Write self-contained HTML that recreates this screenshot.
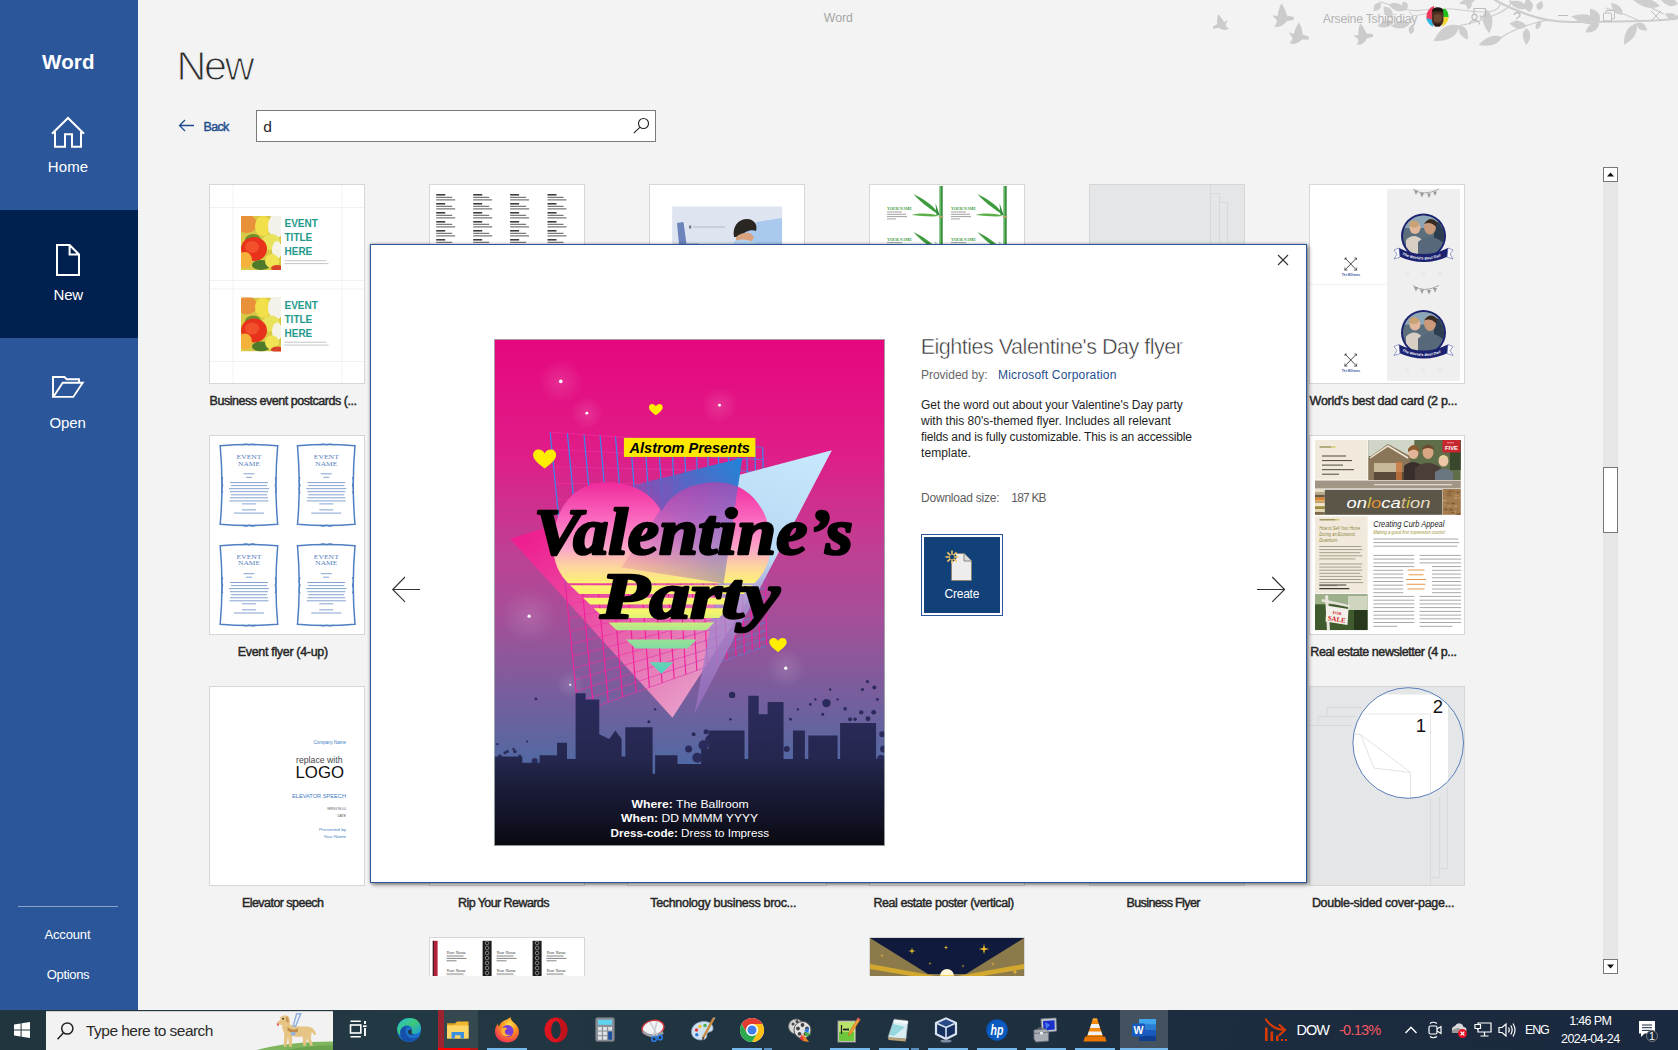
<!DOCTYPE html>
<html lang="en">
<head>
<meta charset="utf-8">
<title>Word</title>
<style>
*{box-sizing:border-box;margin:0;padding:0}
html,body{width:1678px;height:1050px;overflow:hidden;background:#f3f3f3;font-family:"Liberation Sans",sans-serif;color:#262626}
.a{position:absolute}
.t{position:absolute;white-space:nowrap;line-height:1}
</style>
</head>
<body>
<div class="a" style="left:0;top:0;width:138px;height:1010px;background:#2b579a"></div>
<div class="a" style="left:0;top:210px;width:138px;height:128px;background:#002050"></div>
<div class="t" style="left:42.1px;top:50px;font-size:20.5px;line-height:23px;color:#fff;letter-spacing:0.12px;font-weight:bold;">Word</div>
<svg class="a" style="left:0;top:0" width="138" height="440" viewBox="0 0 138 440" fill="none" stroke="#fff" stroke-width="2"><path d="M52.700 133 L68 118 L83.300 133" stroke-linecap="square"/><path d="M55 131.500 V146.700 H65 V134.300 H72 V146.700 H81 V131.500"/><path d="M57 245 H69.600 L79 254.500 V275 H57 Z M69.600 245 V254.500 H79"/><path d="M53 397 V377 H64.500 L66.700 379.200 H79 V382.500" stroke-width="1.900"/><path d="M53.300 396.900 L62.700 382.700 H82.700 L73.300 396.900 Z" stroke-width="1.900"/></svg>
<div class="t" style="left:47.8px;top:158px;font-size:15px;line-height:17px;color:#fff;letter-spacing:0.12px;">Home</div>
<div class="t" style="left:53.5px;top:286px;font-size:15px;line-height:17px;color:#fff;letter-spacing:-0.17px;">New</div>
<div class="t" style="left:49.6px;top:414px;font-size:15px;line-height:17px;color:#fff;letter-spacing:-0.17px;">Open</div>
<div class="a" style="left:18px;top:906px;width:100px;height:1px;background:#8aa3cc"></div>
<div class="t" style="left:44.4px;top:927px;font-size:13px;line-height:15px;color:#fff;letter-spacing:-0.14px;">Account</div>
<div class="t" style="left:46.8px;top:967px;font-size:13px;line-height:15px;color:#fff;letter-spacing:-0.33px;">Options</div>

<svg class="a" style="left:1180px;top:0" width="498" height="60" viewBox="1180 0 498 60"><g fill="#cbcbcb"><path transform="translate(1220,23) rotate(-20) scale(-0.75,0.75)" d="M-10,-0.3 L-5.4,0.8 C-5,-4 -3.5,-9 -1.5,-12 C1,-9 3,-4 3.9,0 L10.8,1.5 L10.8,4.6 L3.9,5.4 C2,8 -1,10.5 -3.9,11.2 L-8.8,11.2 C-7,9 -6,7 -6.2,4.6 L-10,0.8Z"/><path transform="translate(1283,15.5) rotate(0) scale(1.0,1.0)" d="M-10,-0.3 L-5.4,0.8 C-5,-4 -3.5,-9 -1.5,-12 C1,-9 3,-4 3.9,0 L10.8,1.5 L10.8,4.6 L3.9,5.4 C2,8 -1,10.5 -3.9,11.2 L-8.8,11.2 C-7,9 -6,7 -6.2,4.6 L-10,0.8Z"/><path transform="translate(1299,34) rotate(8) scale(0.95,0.95)" d="M-10,-0.3 L-5.4,0.8 C-5,-4 -3.5,-9 -1.5,-12 C1,-9 3,-4 3.9,0 L10.8,1.5 L10.8,4.6 L3.9,5.4 C2,8 -1,10.5 -3.9,11.2 L-8.8,11.2 C-7,9 -6,7 -6.2,4.6 L-10,0.8Z"/><path transform="translate(1363,34) rotate(-8) scale(0.9,0.9)" d="M-10,-0.3 L-5.4,0.8 C-5,-4 -3.5,-9 -1.5,-12 C1,-9 3,-4 3.9,0 L10.8,1.5 L10.8,4.6 L3.9,5.4 C2,8 -1,10.5 -3.9,11.2 L-8.8,11.2 C-7,9 -6,7 -6.2,4.6 L-10,0.8Z"/></g><g fill="none" stroke="#cdcdcd" stroke-linecap="round"><path d="M1380 1.800 Q1392 6 1403.600 9 T1427.500 9.500 T1470 11 T1500 3" stroke-width="1.100"/><path d="M1409.600 12 Q1411 15 1413 15.500 T1427 13.500" stroke-width="1"/><path d="M1410 23 L1413 16" stroke-width=".9"/><path d="M1495 0 Q1505 6 1526 14 T1572 22 T1640 21 T1678 16" stroke-width="2.200"/><path d="M1460 25.500 Q1480 22 1497 14 T1510 0" stroke-width="1.200"/><path d="M1502 37 Q1512 30 1530 24.500 T1548 21" stroke-width="1.200"/><path d="M1606 8 Q1625 14 1640 21" stroke-width="1.100"/><path d="M1640 0 Q1650 8 1664 14" stroke-width="1.300"/></g><path d="M1459.8 25.6Q1443.0 21.1 1433.5 41.0Q1455.5 42.4 1459.8 25.6ZM1459.8 25.6Q1456.3 34.9 1467.6 39.5Q1469.5 27.4 1459.8 25.6ZM1486.2 9.3Q1478.0 20.1 1489.3 33.3Q1496.9 17.7 1486.2 9.3ZM1502.4 37.2Q1490.2 32.2 1478.4 45.0Q1495.4 48.5 1502.4 37.2ZM1526.5 26.3Q1521.0 17.6 1509.4 23.2Q1518.3 32.5 1526.5 26.3ZM1526.5 27.9Q1518.9 34.7 1526.5 45.0Q1534.1 34.7 1526.5 27.9ZM1599.3 21.7Q1589.9 10.2 1571.4 16.3Q1586.3 28.9 1599.3 21.7ZM1599.3 21.7Q1602.6 11.5 1590.0 8.5Q1588.6 21.3 1599.3 21.7ZM1599.3 23.2Q1589.5 20.6 1585.3 32.5Q1597.9 33.3 1599.3 23.2ZM1622.5 14.7Q1623.3 4.7 1611.0 3.0Q1612.5 15.3 1622.5 14.7ZM1636.5 23.2Q1623.3 27.2 1624.0 45.0Q1639.7 36.6 1636.5 23.2ZM1636.5 23.2Q1637.2 31.6 1647.3 30.2Q1644.4 20.4 1636.5 23.2ZM1475.0 0.0Q1467.4 -4.2 1459.0 3.5Q1469.8 7.0 1475.0 0.0ZM1470.0 1.0Q1463.7 3.1 1468.0 9.5Q1474.7 5.7 1470.0 1.0ZM1527.0 8.0Q1522.4 -1.7 1509.0 1.5Q1517.2 12.5 1527.0 8.0ZM1530.0 12.0Q1537.2 4.6 1527.0 -2.0Q1520.4 8.2 1530.0 12.0ZM1538.0 10.0Q1545.7 9.1 1542.0 1.0Q1533.5 3.7 1538.0 10.0ZM1536.0 29.0Q1542.0 28.3 1541.0 21.0Q1534.0 23.3 1536.0 29.0ZM1660.0 6.0Q1651.1 -4.7 1633.0 0.0Q1647.3 11.9 1660.0 6.0ZM1678.0 4.0Q1672.9 -5.0 1661.0 0.0Q1669.5 9.8 1678.0 4.0ZM1678.0 19.0Q1675.2 10.8 1665.0 14.0Q1670.4 23.2 1678.0 19.0ZM1650.0 3.0Q1649.4 -5.1 1640.0 -3.0Q1642.6 6.3 1650.0 3.0ZM1380.4 2.4Q1372.4 2.0 1373.8 11.3Q1383.1 9.9 1380.4 2.4ZM1384.0 6.6Q1381.6 15.9 1393.0 18.0Q1393.6 6.5 1384.0 6.6ZM1388.7 4.2Q1393.5 13.8 1406.6 10.1Q1398.2 -0.7 1388.7 4.2ZM1403.0 1.8Q1399.8 7.6 1407.2 9.0Q1409.6 1.8 1403.0 1.8ZM1394.0 22.0Q1385.7 17.2 1377.4 26.2Q1389.0 30.1 1394.0 22.0ZM1410.0 23.2Q1401.2 16.9 1391.0 26.2Q1403.6 31.9 1410.0 23.2ZM1412.0 25.0Q1405.9 28.1 1410.8 34.6Q1417.2 29.5 1412.0 25.0Z" fill="#cecece"/></svg>
<div class="t" style="left:823.8px;top:11px;font-size:12.3px;line-height:14px;color:#a6a6a6;letter-spacing:-0.04px;">Word</div>
<div class="t" style="left:1322.8px;top:12px;font-size:12.3px;line-height:14px;color:#b4b4b4;letter-spacing:-0.25px;">Arseine Tshipidiay</div>
<svg class="a" style="left:1426px;top:4.700px" width="23" height="23" viewBox="0 0 25 25"><clipPath id="avc"><circle cx="12.500" cy="12.500" r="12"/></clipPath><g clip-path="url(#avc)"><rect width="25" height="25" fill="#f4f4f4"/><path d="M0 0H9L7 17H0Z" fill="#ee3a5c"/><path d="M0 14L7 16L8 25H0Z" fill="#2ab5e0"/><path d="M18 4H25V14H19Z" fill="#22bf22"/><path d="M19 13H25V25H17Z" fill="#f0d832"/><path d="M6.500 9 Q7 3.500 12.500 3.500 Q18.500 3.500 19 9 V17 Q18 23 12.500 23.500 Q7 23 6.500 17Z" fill="#4a2e20"/><path d="M8.500 11 q4 -2.500 8.500 0 l-.3 6 q-4 4 -8 0z" fill="#6b4630"/><path d="M9 19.500 q3.500 2 7 0 l-.5 4 h-6z" fill="#2a1a14"/><path d="M6.500 6 Q8 2.500 12.500 2.500 Q17.500 2.500 19 6 L18 8 Q12.500 5.500 7.500 8Z" fill="#1c1410"/></g></svg>
<svg class="a" style="left:1468px;top:6px" width="20" height="20" viewBox="0 0 20 20" fill="none" stroke="#bdbdbd" stroke-width="1.100"><path d="M6 8V2.500H17.500V10H15L13 12.500V10H11.500"/><circle cx="6.500" cy="11" r="2.600"/><path d="M1.500 18.500 Q1.500 14.500 6.500 14.500 Q11.500 14.500 11.500 18.500"/></svg>
<div class="t" style="left:1512.8px;top:8px;font-size:15px;line-height:17px;color:#bdbdbd;">?</div>
<div class="a" style="left:1558px;top:15px;width:10px;height:1px;background:#bdbdbd"></div>
<svg class="a" style="left:1602px;top:9px" width="14" height="14" viewBox="0 0 14 14" fill="none" stroke="#bdbdbd" stroke-width="1"><rect x="1.500" y="4" width="8" height="8" rx="1"/><path d="M4 4V2.200Q4 1.500 5 1.500H11.500Q12.500 1.500 12.500 2.500V9Q12.500 9.800 11.500 9.800H9.500"/></svg>
<svg class="a" style="left:1649px;top:9px" width="14" height="14" viewBox="0 0 14 14" fill="none" stroke="#bdbdbd" stroke-width="1"><path d="M2 2L12 12M12 2L2 12"/></svg>
<div class="t" style="left:176.6px;top:43px;font-size:41.3px;line-height:46px;color:#2b2b2b;letter-spacing:-2.37px;-webkit-text-stroke:1.15px #f3f3f3;">New</div>
<svg class="a" style="left:177px;top:118px" width="20" height="16" viewBox="0 0 20 16" fill="none" stroke="#1f4e8f" stroke-width="1.300"><path d="M17 7.500H2.500M8 2L2.500 7.500L8 13"/></svg>
<div class="t" style="left:203.6px;top:120px;font-size:12.5px;line-height:14px;color:#1f4e8f;letter-spacing:-0.70px;-webkit-text-stroke:0.45px #1f4e8f;">Back</div>
<div class="a" style="left:256px;top:110px;width:400px;height:32px;background:#fff;border:1px solid #7a7a7a"></div>
<div class="t" style="left:263.2px;top:118px;font-size:15.5px;line-height:17px;color:#262626;">d</div>
<svg class="a" style="left:631px;top:116px" width="20" height="20" viewBox="0 0 20 20" fill="none" stroke="#222" stroke-width="1.100"><circle cx="12.500" cy="7.500" r="5"/><path d="M8.800 11.300L2.800 17.200"/></svg>
<div class="a" style="left:1603px;top:167px;width:15px;height:807px;background:#e6e6e6"></div>
<div class="a" style="left:1603px;top:167px;width:15px;height:15px;background:#fff;border:1px solid #777"></div>
<svg class="a" style="left:1603px;top:167px" width="15" height="15" viewBox="0 0 15 15"><path d="M4 9.500H11L7.500 5.500Z" fill="#111"/></svg>
<div class="a" style="left:1603px;top:959px;width:15px;height:15px;background:#fff;border:1px solid #777"></div>
<svg class="a" style="left:1603px;top:959px" width="15" height="15" viewBox="0 0 15 15"><path d="M4 5.500H11L7.500 9.500Z" fill="#111"/></svg>
<div class="a" style="left:1603px;top:467px;width:15px;height:66px;background:#fff;border:1px solid #777"></div>

<!-- thumbnails -->
<div class="a" style="left:209px;top:184px;width:156px;height:200px;background:#fff;border:1px solid #d6d6d6;overflow:hidden"><svg class="a" style="left:0;top:0" width="154" height="198" viewBox="0 0 154 198" font-family="Liberation Sans, sans-serif" ><path d="M0 22.5H154" stroke="#f1f1f1" stroke-width="1"/><path d="M0 95.5H154" stroke="#f1f1f1" stroke-width="1"/><path d="M0 104H154" stroke="#f1f1f1" stroke-width="1"/><path d="M0 176.5H154" stroke="#f1f1f1" stroke-width="1"/><path d="M23 0V198" stroke="#f3f3f3" stroke-width="1"/><path d="M132 0V198" stroke="#f3f3f3" stroke-width="1"/><g transform="translate(31,31)"><clipPath id="r0c"><rect width="40" height="54"/></clipPath><g clip-path="url(#r0c)"><rect width="40" height="54" fill="#d9c845"/><ellipse cx="6" cy="8" rx="10" ry="9" fill="#e9903a"/><ellipse cx="22" cy="10" rx="8" ry="10" fill="#f2e04a"/><ellipse cx="35" cy="10" rx="8" ry="12" fill="#f3f1ea"/><ellipse cx="12" cy="24" rx="8" ry="6" fill="#6f8f2e"/><ellipse cx="30" cy="26" rx="9" ry="8" fill="#e8e35a"/><ellipse cx="36" cy="34" rx="5" ry="9" fill="#f5f3e6"/><ellipse cx="13" cy="33" rx="13" ry="12" fill="#e8321c"/><ellipse cx="11" cy="31" rx="7" ry="6" fill="#f2502a"/><ellipse cx="4" cy="44" rx="7" ry="8" fill="#f4b23a"/><ellipse cx="20" cy="49" rx="9" ry="5" fill="#4f7a2a"/><ellipse cx="31" cy="45" rx="7" ry="7" fill="#f0e455"/><ellipse cx="36" cy="52" rx="6" ry="3" fill="#d8402a"/></g></g><text x="74.5" y="42" font-size="10" font-weight="bold" fill="#1f9a8c">EVENT</text><text x="74.5" y="56" font-size="10" font-weight="bold" fill="#1f9a8c">TITLE</text><text x="74.5" y="70" font-size="10" font-weight="bold" fill="#1f9a8c">HERE</text><path d="M74.5 75.7h42M74.5 78.6h44" stroke="#b5b5b5" stroke-width=".8"/><g transform="translate(31,112.5)"><clipPath id="r1c"><rect width="40" height="54"/></clipPath><g clip-path="url(#r1c)"><rect width="40" height="54" fill="#d9c845"/><ellipse cx="6" cy="8" rx="10" ry="9" fill="#e9903a"/><ellipse cx="22" cy="10" rx="8" ry="10" fill="#f2e04a"/><ellipse cx="35" cy="10" rx="8" ry="12" fill="#f3f1ea"/><ellipse cx="12" cy="24" rx="8" ry="6" fill="#6f8f2e"/><ellipse cx="30" cy="26" rx="9" ry="8" fill="#e8e35a"/><ellipse cx="36" cy="34" rx="5" ry="9" fill="#f5f3e6"/><ellipse cx="13" cy="33" rx="13" ry="12" fill="#e8321c"/><ellipse cx="11" cy="31" rx="7" ry="6" fill="#f2502a"/><ellipse cx="4" cy="44" rx="7" ry="8" fill="#f4b23a"/><ellipse cx="20" cy="49" rx="9" ry="5" fill="#4f7a2a"/><ellipse cx="31" cy="45" rx="7" ry="7" fill="#f0e455"/><ellipse cx="36" cy="52" rx="6" ry="3" fill="#d8402a"/></g></g><text x="74.5" y="123.5" font-size="10" font-weight="bold" fill="#1f9a8c">EVENT</text><text x="74.5" y="137.5" font-size="10" font-weight="bold" fill="#1f9a8c">TITLE</text><text x="74.5" y="151.5" font-size="10" font-weight="bold" fill="#1f9a8c">HERE</text><path d="M74.5 157.2h42M74.5 160.1h44" stroke="#b5b5b5" stroke-width=".8"/></svg></div>
<div class="a" style="left:429px;top:184px;width:156px;height:200px;background:#fff;border:1px solid #d6d6d6;overflow:hidden"><svg class="a" style="left:0;top:0" width="154" height="198" viewBox="0 0 154 198" font-family="Liberation Sans, sans-serif" ><path d="M6.2 9.8h9" stroke="#333" stroke-width="1.5"/><path d="M6.2 12.3h16M6.2 14.8h19" stroke="#7a7a7a" stroke-width="1.2"/><path d="M6.2 18.8h9" stroke="#333" stroke-width="1.5"/><path d="M6.2 21.3h16M6.2 23.8h19" stroke="#7a7a7a" stroke-width="1.2"/><path d="M6.2 27.8h9" stroke="#333" stroke-width="1.5"/><path d="M6.2 30.3h16M6.2 32.8h19" stroke="#7a7a7a" stroke-width="1.2"/><path d="M6.2 36.8h9" stroke="#333" stroke-width="1.5"/><path d="M6.2 39.3h16M6.2 41.8h19" stroke="#7a7a7a" stroke-width="1.2"/><path d="M6.2 45.8h9" stroke="#333" stroke-width="1.5"/><path d="M6.2 48.3h16M6.2 50.8h19" stroke="#7a7a7a" stroke-width="1.2"/><path d="M6.2 54.8h9" stroke="#333" stroke-width="1.5"/><path d="M6.2 57.3h16M6.2 59.8h19" stroke="#7a7a7a" stroke-width="1.2"/><path d="M43.2 9.8h9" stroke="#333" stroke-width="1.5"/><path d="M43.2 12.3h16M43.2 14.8h19" stroke="#7a7a7a" stroke-width="1.2"/><path d="M43.2 18.8h9" stroke="#333" stroke-width="1.5"/><path d="M43.2 21.3h16M43.2 23.8h19" stroke="#7a7a7a" stroke-width="1.2"/><path d="M43.2 27.8h9" stroke="#333" stroke-width="1.5"/><path d="M43.2 30.3h16M43.2 32.8h19" stroke="#7a7a7a" stroke-width="1.2"/><path d="M43.2 36.8h9" stroke="#333" stroke-width="1.5"/><path d="M43.2 39.3h16M43.2 41.8h19" stroke="#7a7a7a" stroke-width="1.2"/><path d="M43.2 45.8h9" stroke="#333" stroke-width="1.5"/><path d="M43.2 48.3h16M43.2 50.8h19" stroke="#7a7a7a" stroke-width="1.2"/><path d="M43.2 54.8h9" stroke="#333" stroke-width="1.5"/><path d="M43.2 57.3h16M43.2 59.8h19" stroke="#7a7a7a" stroke-width="1.2"/><path d="M80.1 9.8h9" stroke="#333" stroke-width="1.5"/><path d="M80.1 12.3h16M80.1 14.8h19" stroke="#7a7a7a" stroke-width="1.2"/><path d="M80.1 18.8h9" stroke="#333" stroke-width="1.5"/><path d="M80.1 21.3h16M80.1 23.8h19" stroke="#7a7a7a" stroke-width="1.2"/><path d="M80.1 27.8h9" stroke="#333" stroke-width="1.5"/><path d="M80.1 30.3h16M80.1 32.8h19" stroke="#7a7a7a" stroke-width="1.2"/><path d="M80.1 36.8h9" stroke="#333" stroke-width="1.5"/><path d="M80.1 39.3h16M80.1 41.8h19" stroke="#7a7a7a" stroke-width="1.2"/><path d="M80.1 45.8h9" stroke="#333" stroke-width="1.5"/><path d="M80.1 48.3h16M80.1 50.8h19" stroke="#7a7a7a" stroke-width="1.2"/><path d="M80.1 54.8h9" stroke="#333" stroke-width="1.5"/><path d="M80.1 57.3h16M80.1 59.8h19" stroke="#7a7a7a" stroke-width="1.2"/><path d="M117.5 9.8h9" stroke="#333" stroke-width="1.5"/><path d="M117.5 12.3h16M117.5 14.8h19" stroke="#7a7a7a" stroke-width="1.2"/><path d="M117.5 18.8h9" stroke="#333" stroke-width="1.5"/><path d="M117.5 21.3h16M117.5 23.8h19" stroke="#7a7a7a" stroke-width="1.2"/><path d="M117.5 27.8h9" stroke="#333" stroke-width="1.5"/><path d="M117.5 30.3h16M117.5 32.8h19" stroke="#7a7a7a" stroke-width="1.2"/><path d="M117.5 36.8h9" stroke="#333" stroke-width="1.5"/><path d="M117.5 39.3h16M117.5 41.8h19" stroke="#7a7a7a" stroke-width="1.2"/><path d="M117.5 45.8h9" stroke="#333" stroke-width="1.5"/><path d="M117.5 48.3h16M117.5 50.8h19" stroke="#7a7a7a" stroke-width="1.2"/><path d="M117.5 54.8h9" stroke="#333" stroke-width="1.5"/><path d="M117.5 57.3h16M117.5 59.8h19" stroke="#7a7a7a" stroke-width="1.2"/></svg></div>
<div class="a" style="left:649px;top:184px;width:156px;height:200px;background:#fff;border:1px solid #d6d6d6;overflow:hidden"><svg class="a" style="left:0;top:0" width="154" height="198" viewBox="0 0 154 198" font-family="Liberation Sans, sans-serif" ><rect x="22.2" y="21.5" width="110" height="80" fill="#dfe4f1"/><path d="M27 38 l6.500 -1 l3 22 h-7.500z" fill="#6c84bb"/><path d="M33 58.500h16v1.500h-16z" fill="#8da0cc"/><rect x="39" y="40.500" width="2.200" height="3" fill="#777"/><path d="M43 42h32" stroke="#b5b8c4" stroke-width="1"/><path d="M86 60 C88 48 98 38 112 36 L132 33 V62 H86Z" fill="#a9caee"/><path d="M84 52 C82 42 88 34 97 34 C104 34 108 40 106 46 C102 44 94 46 90 52Z" fill="#2a2622"/><path d="M86 52 q6 -5 14 -4 l4 4 l-4 8 h-14z" fill="#d9a27e"/><path d="M84 56 q10 -4 22 2 v4 h-22z" fill="#b9d3f0"/></svg></div>
<div class="a" style="left:869px;top:184px;width:156px;height:200px;background:#fff;border:1px solid #d6d6d6;overflow:hidden"><svg class="a" style="left:0;top:0" width="154" height="198" viewBox="0 0 154 198" font-family="Liberation Sans, sans-serif" ><rect x="69.5" y="1" width="3.2" height="70" fill="#2f8a3b"/><rect x="70.1" y="1" width="1" height="70" fill="#6fc05a"/><path d="M69.5 30 C59.5 24 49.5 16 43.5 9 C53.5 14 63.5 20 69.5 30Z" fill="#3e9b3c"/><path d="M69.5 31 C59.5 28 49.5 28 41.5 30 C51.5 31 61.5 32 69.5 31Z" fill="#5cb04a"/><path d="M69.5 30 l-4 -12 l1 12z" fill="#2f8a3b"/><rect x="69.0" y="31" width="4.2" height="1.6" fill="#b5a56a"/><path d="M69.5 68 C59.5 62 49.5 54 43.5 47 C53.5 52 63.5 58 69.5 68Z" fill="#3e9b3c"/><path d="M69.5 69 C59.5 66 49.5 66 41.5 68 C51.5 69 61.5 70 69.5 69Z" fill="#5cb04a"/><path d="M69.5 68 l-4 -12 l1 12z" fill="#2f8a3b"/><rect x="69.0" y="69" width="4.2" height="1.6" fill="#b5a56a"/><rect x="133.5" y="1" width="3.2" height="70" fill="#2f8a3b"/><rect x="134.1" y="1" width="1" height="70" fill="#6fc05a"/><path d="M133.5 30 C123.5 24 113.5 16 107.5 9 C117.5 14 127.5 20 133.5 30Z" fill="#3e9b3c"/><path d="M133.5 31 C123.5 28 113.5 28 105.5 30 C115.5 31 125.5 32 133.5 31Z" fill="#5cb04a"/><path d="M133.5 30 l-4 -12 l1 12z" fill="#2f8a3b"/><rect x="133.0" y="31" width="4.2" height="1.6" fill="#b5a56a"/><path d="M133.5 68 C123.5 62 113.5 54 107.5 47 C117.5 52 127.5 58 133.5 68Z" fill="#3e9b3c"/><path d="M133.5 69 C123.5 66 113.5 66 105.5 68 C115.5 69 125.5 70 133.5 69Z" fill="#5cb04a"/><path d="M133.5 68 l-4 -12 l1 12z" fill="#2f8a3b"/><rect x="133.0" y="69" width="4.2" height="1.6" fill="#b5a56a"/><text x="17" y="24.9" font-family="Liberation Serif, serif" font-size="3.9" font-weight="bold" fill="#3c9a3a" textLength="25" lengthAdjust="spacingAndGlyphs">YOUR NAME</text><path d="M17 27h15M17 29.3h19M17 31.6h20M17 33.9h9" stroke="#8c8c8c" stroke-width=".8"/><text x="17" y="55.5" font-family="Liberation Serif, serif" font-size="3.9" font-weight="bold" fill="#3c9a3a" textLength="25" lengthAdjust="spacingAndGlyphs">YOUR NAME</text><path d="M17 57.6h15M17 59.900000000000006h19M17 62.2h20M17 64.5h9" stroke="#8c8c8c" stroke-width=".8"/><text x="81" y="24.9" font-family="Liberation Serif, serif" font-size="3.9" font-weight="bold" fill="#3c9a3a" textLength="25" lengthAdjust="spacingAndGlyphs">YOUR NAME</text><path d="M81 27h15M81 29.3h19M81 31.6h20M81 33.9h9" stroke="#8c8c8c" stroke-width=".8"/><text x="81" y="55.5" font-family="Liberation Serif, serif" font-size="3.9" font-weight="bold" fill="#3c9a3a" textLength="25" lengthAdjust="spacingAndGlyphs">YOUR NAME</text><path d="M81 57.6h15M81 59.900000000000006h19M81 62.2h20M81 64.5h9" stroke="#8c8c8c" stroke-width=".8"/></svg></div>
<div class="a" style="left:1089px;top:184px;width:156px;height:200px;background:#e5e6e8;border:1px solid #d6d6d6;overflow:hidden"><svg class="a" style="left:0;top:0" width="154" height="198" viewBox="0 0 154 198" font-family="Liberation Sans, sans-serif" ><path d="M120.5 0V198M120.5 8.5H129.5V198M129.5 17.5H137.5V198" fill="none" stroke="#d8d9db" stroke-width="1"/></svg></div>
<div class="a" style="left:1309px;top:184px;width:156px;height:200px;background:#fff;border:1px solid #d6d6d6;overflow:hidden"><svg class="a" style="left:0;top:0" width="154" height="198" viewBox="0 0 154 198" font-family="Liberation Sans, sans-serif" ><rect x="77" y="4" width="73" height="192" fill="#efefef"/><path d="M0 99.5H77" stroke="#f0f0f0"/><g transform="translate(0,51)"><path d="M103 -47 q10 8 26 0" fill="none" stroke="#888" stroke-width=".7"/><path d="M104 -45.5h4l-2 4.5z" fill="#9a9a9a"/><path d="M110 -43.0h4l-2 4.5z" fill="#9a9a9a"/><path d="M117 -42.5h4l-2 4.5z" fill="#9a9a9a"/><path d="M123 -44.5h4l-2 4.5z" fill="#9a9a9a"/><circle cx="113.5" cy="0" r="22.5" fill="#1b2370"/><clipPath id="dc1"><circle cx="113.5" cy="0" r="20.5"/></clipPath><g clip-path="url(#dc1)"><rect x="90" y="-22" width="48" height="44" fill="#5a6e7c"/><rect x="90" y="-22" width="48" height="14" fill="#8ea7b8"/><rect x="124" y="-14" width="16" height="20" fill="#2d3d50"/><ellipse cx="105" cy="-8" rx="5.5" ry="6" fill="#e0b79c"/><ellipse cx="104" cy="-12" rx="5" ry="3.5" fill="#c9a273"/><path d="M96 20 V4 q8 -8 16 0 V20z" fill="#d8cfc4"/><ellipse cx="120" cy="-9" rx="6" ry="7.5" fill="#c99a7c"/><path d="M114 -12 q6 -9 13 -2 l-1 5 q-5 -6 -12 -3z" fill="#3a2c22"/><path d="M108 22 V6 q12 -10 24 0 V22z" fill="#56687a"/></g><path d="M89 12 q24 12 49 0 l1 8 q-25 12 -51 0z" fill="#1b2370"/><path d="M89 12 l-5 2 l3 4 l-3 5 l6 -2z M138 12 l5 2 l-3 4 l3 5 l-6 -2z" fill="#fff" stroke="#5560a8" stroke-width=".6"/><path id="dc1p" d="M92 18.5 q21.5 10 43 0" fill="none"/><text font-size="3.6" font-weight="bold" font-style="italic" fill="#fff"><textPath href="#dc1p" textLength="40" lengthAdjust="spacingAndGlyphs">The World's Best Dad</textPath></text><circle cx="97" cy="38" r="1.6" fill="none" stroke="#dedede" stroke-width=".6"/><circle cx="113" cy="38" r="1.6" fill="none" stroke="#dedede" stroke-width=".6"/><circle cx="130" cy="38" r="1.6" fill="none" stroke="#dedede" stroke-width=".6"/></g><g transform="translate(0,147.5)"><path d="M103 -47 q10 8 26 0" fill="none" stroke="#888" stroke-width=".7"/><path d="M104 -45.5h4l-2 4.5z" fill="#9a9a9a"/><path d="M110 -43.0h4l-2 4.5z" fill="#9a9a9a"/><path d="M117 -42.5h4l-2 4.5z" fill="#9a9a9a"/><path d="M123 -44.5h4l-2 4.5z" fill="#9a9a9a"/><circle cx="113.5" cy="0" r="22.5" fill="#1b2370"/><clipPath id="dc2"><circle cx="113.5" cy="0" r="20.5"/></clipPath><g clip-path="url(#dc2)"><rect x="90" y="-22" width="48" height="44" fill="#5a6e7c"/><rect x="90" y="-22" width="48" height="14" fill="#8ea7b8"/><rect x="124" y="-14" width="16" height="20" fill="#2d3d50"/><ellipse cx="105" cy="-8" rx="5.5" ry="6" fill="#e0b79c"/><ellipse cx="104" cy="-12" rx="5" ry="3.5" fill="#c9a273"/><path d="M96 20 V4 q8 -8 16 0 V20z" fill="#d8cfc4"/><ellipse cx="120" cy="-9" rx="6" ry="7.5" fill="#c99a7c"/><path d="M114 -12 q6 -9 13 -2 l-1 5 q-5 -6 -12 -3z" fill="#3a2c22"/><path d="M108 22 V6 q12 -10 24 0 V22z" fill="#56687a"/></g><path d="M89 12 q24 12 49 0 l1 8 q-25 12 -51 0z" fill="#1b2370"/><path d="M89 12 l-5 2 l3 4 l-3 5 l6 -2z M138 12 l5 2 l-3 4 l3 5 l-6 -2z" fill="#fff" stroke="#5560a8" stroke-width=".6"/><path id="dc2p" d="M92 18.5 q21.5 10 43 0" fill="none"/><text font-size="3.6" font-weight="bold" font-style="italic" fill="#fff"><textPath href="#dc2p" textLength="40" lengthAdjust="spacingAndGlyphs">The World's Best Dad</textPath></text><circle cx="97" cy="38" r="1.6" fill="none" stroke="#dedede" stroke-width=".6"/><circle cx="113" cy="38" r="1.6" fill="none" stroke="#dedede" stroke-width=".6"/><circle cx="130" cy="38" r="1.6" fill="none" stroke="#dedede" stroke-width=".6"/></g><g stroke="#333" stroke-width=".9" fill="none"><path d="M35 73.0l11.5 12M46.5 73.0l-11.5 12"/><path d="M35 75.0v-2h2M46.5 75.0v-2h-2" stroke-width=".7"/><path d="M44 85.2h2.7v-2.7M37.5 85.2h-2.7v-2.7" stroke-width=".7"/></g><text x="41" y="91.3" text-anchor="middle" font-size="2.9" font-weight="bold" fill="#4858a8">The Millianos</text><g stroke="#333" stroke-width=".9" fill="none"><path d="M35 169.0l11.5 12M46.5 169.0l-11.5 12"/><path d="M35 171.0v-2h2M46.5 171.0v-2h-2" stroke-width=".7"/><path d="M44 181.2h2.7v-2.7M37.5 181.2h-2.7v-2.7" stroke-width=".7"/></g><text x="41" y="187.3" text-anchor="middle" font-size="2.9" font-weight="bold" fill="#4858a8">The Millianos</text></svg></div>
<div class="a" style="left:209px;top:435px;width:156px;height:200px;background:#fff;border:1px solid #d6d6d6;overflow:hidden"><svg class="a" style="left:0;top:0" width="154" height="198" viewBox="0 0 154 198" font-family="Liberation Sans, sans-serif" ><g transform="translate(9.2,8.3)" fill="none" stroke="#4f7fc2"><path d="M1 1.5 Q29.75 -1 58.5 1.5 Q55.0 40.75 58.5 80.0 Q29.75 82.5 1 80.0 Q4.5 40.75 1 1.5Z" stroke-width="1.5"/><path d="M23 .8 q3.5 -2.2 7 0 q3.5 -2.2 7 0M23 80.7 q3.5 2.2 7 0 q3.5 2.2 7 0" stroke-width="1.1"/><path d="M3.6 33 q-2 4 0 8 q-2 4 0 8M55.9 33 q2 4 0 8 q2 4 0 8" stroke-width="1.1"/></g><g font-family="Liberation Serif, serif" font-size="6.6" fill="#5a83c0" text-anchor="middle"><text x="39.0" y="22.6" textLength="25" lengthAdjust="spacingAndGlyphs">EVENT</text><text x="39.0" y="29.5" textLength="22" lengthAdjust="spacingAndGlyphs">NAME</text></g><path d="M33.5 37.8h11M36.0 41.3h6M20.0 46.6h38M21.0 49.6h36M19.0 52.7h40M20.0 55.7h38M21.0 58.8h36M20.0 61.8h38M19.5 64.9h39M32.0 67.9h14M32.0 73.89999999999999h14M24.0 77.1h30" stroke="#6f93c9" stroke-width="1" stroke-opacity=".85"/><g transform="translate(9.2,108.2)" fill="none" stroke="#4f7fc2"><path d="M1 1.5 Q29.75 -1 58.5 1.5 Q55.0 40.75 58.5 80.0 Q29.75 82.5 1 80.0 Q4.5 40.75 1 1.5Z" stroke-width="1.5"/><path d="M23 .8 q3.5 -2.2 7 0 q3.5 -2.2 7 0M23 80.7 q3.5 2.2 7 0 q3.5 2.2 7 0" stroke-width="1.1"/><path d="M3.6 33 q-2 4 0 8 q-2 4 0 8M55.9 33 q2 4 0 8 q2 4 0 8" stroke-width="1.1"/></g><g font-family="Liberation Serif, serif" font-size="6.6" fill="#5a83c0" text-anchor="middle"><text x="39.0" y="122.5" textLength="25" lengthAdjust="spacingAndGlyphs">EVENT</text><text x="39.0" y="129.4" textLength="22" lengthAdjust="spacingAndGlyphs">NAME</text></g><path d="M33.5 137.7h11M36.0 141.2h6M20.0 146.5h38M21.0 149.6h36M19.0 152.6h40M20.0 155.7h38M21.0 158.7h36M20.0 161.8h38M19.5 164.8h39M32.0 167.8h14M32.0 173.8h14M24.0 177.0h30" stroke="#6f93c9" stroke-width="1" stroke-opacity=".85"/><g transform="translate(86.5,8.3)" fill="none" stroke="#4f7fc2"><path d="M1 1.5 Q29.75 -1 58.5 1.5 Q55.0 40.75 58.5 80.0 Q29.75 82.5 1 80.0 Q4.5 40.75 1 1.5Z" stroke-width="1.5"/><path d="M23 .8 q3.5 -2.2 7 0 q3.5 -2.2 7 0M23 80.7 q3.5 2.2 7 0 q3.5 2.2 7 0" stroke-width="1.1"/><path d="M3.6 33 q-2 4 0 8 q-2 4 0 8M55.9 33 q2 4 0 8 q2 4 0 8" stroke-width="1.1"/></g><g font-family="Liberation Serif, serif" font-size="6.6" fill="#5a83c0" text-anchor="middle"><text x="116.3" y="22.6" textLength="25" lengthAdjust="spacingAndGlyphs">EVENT</text><text x="116.3" y="29.5" textLength="22" lengthAdjust="spacingAndGlyphs">NAME</text></g><path d="M110.8 37.8h11M113.3 41.3h6M97.3 46.6h38M98.3 49.6h36M96.3 52.7h40M97.3 55.7h38M98.3 58.8h36M97.3 61.8h38M96.8 64.9h39M109.3 67.9h14M109.3 73.89999999999999h14M101.3 77.1h30" stroke="#6f93c9" stroke-width="1" stroke-opacity=".85"/><g transform="translate(86.5,108.2)" fill="none" stroke="#4f7fc2"><path d="M1 1.5 Q29.75 -1 58.5 1.5 Q55.0 40.75 58.5 80.0 Q29.75 82.5 1 80.0 Q4.5 40.75 1 1.5Z" stroke-width="1.5"/><path d="M23 .8 q3.5 -2.2 7 0 q3.5 -2.2 7 0M23 80.7 q3.5 2.2 7 0 q3.5 2.2 7 0" stroke-width="1.1"/><path d="M3.6 33 q-2 4 0 8 q-2 4 0 8M55.9 33 q2 4 0 8 q2 4 0 8" stroke-width="1.1"/></g><g font-family="Liberation Serif, serif" font-size="6.6" fill="#5a83c0" text-anchor="middle"><text x="116.3" y="122.5" textLength="25" lengthAdjust="spacingAndGlyphs">EVENT</text><text x="116.3" y="129.4" textLength="22" lengthAdjust="spacingAndGlyphs">NAME</text></g><path d="M110.8 137.7h11M113.3 141.2h6M97.3 146.5h38M98.3 149.6h36M96.3 152.6h40M97.3 155.7h38M98.3 158.7h36M97.3 161.8h38M96.8 164.8h39M109.3 167.8h14M109.3 173.8h14M101.3 177.0h30" stroke="#6f93c9" stroke-width="1" stroke-opacity=".85"/></svg></div>
<div class="a" style="left:1309px;top:435px;width:156px;height:200px;background:#fff;border:1px solid #d6d6d6;overflow:hidden"><svg class="a" style="left:0;top:0" width="154" height="198" viewBox="0 0 154 198" font-family="Liberation Sans, sans-serif" ><rect x="5" y="4" width="52.6" height="39.6" fill="#f1eadc"/><path d="M9.5 11h12" stroke="#8a8240" stroke-width="1.2"/><path d="M21.5 11h4" stroke="#c9b93c" stroke-width="1"/><path d="M12 20.0h24" stroke="#5b5548" stroke-width="1.1"/><path d="M12 24.55h30" stroke="#5b5548" stroke-width="1.1"/><path d="M12 29.1h21" stroke="#5b5548" stroke-width="1.1"/><path d="M12 33.65h32" stroke="#5b5548" stroke-width="1.1"/><path d="M12 38.2h17" stroke="#5b5548" stroke-width="1.1"/><clipPath id="nlp"><rect x="58.3" y="4" width="92.5" height="40"/></clipPath><g clip-path="url(#nlp)"><rect x="58.3" y="4" width="92.5" height="40" fill="#5f6d49"/><rect x="58.3" y="4" width="46" height="16" fill="#cfd6c8"/><path d="M58.3 22 L78 8 L100 20 V44 H58.3Z" fill="#8b7558"/><path d="M60 22 L78 10 L98 22" fill="none" stroke="#efe6d4" stroke-width="1.5"/><rect x="64" y="27" width="28" height="9" fill="#c8b89a"/><rect x="64" y="36" width="30" height="8" fill="#5a4a3a"/><rect x="86" y="26" width="6" height="18" fill="#c9743a" opacity=".8"/><ellipse cx="103.5" cy="17" rx="5" ry="6" fill="#e2b596"/><path d="M98 13 q6 -8 11 0 l0 3 q-5 -5 -11 0z" fill="#8a5a30"/><path d="M94 44 V30 q9 -8 18 0 V44z" fill="#3a2e2c"/><ellipse cx="118" cy="16" rx="5.5" ry="7" fill="#d9a684"/><path d="M112 12 q6 -7 12 0 v2 q-6 -4 -12 0z" fill="#6a4a30"/><path d="M105 44 V32 q13 -10 26 0 V44z" fill="#4a3e36"/><ellipse cx="133.5" cy="25" rx="5" ry="5.5" fill="#ecc6a6"/><path d="M128.5 22 q5 -6 10 0 q-5 -2 -10 0z" fill="#e8d9a0"/><path d="M125 44 V36 q9 -7 18 0 V44z" fill="#6a7680"/><rect x="140" y="4" width="11" height="30" fill="#39482c"/><rect x="132.5" y="4" width="18" height="12.5" fill="#c7282e"/><text x="141.5" y="14.2" font-size="5.6" font-weight="bold" fill="#fff" text-anchor="middle" textLength="13" lengthAdjust="spacingAndGlyphs">FIVE</text><path d="M137 6.8h7" stroke="#f3b0b0" stroke-width=".8"/></g><rect x="5" y="44.5" width="145.8" height="8" fill="#a39585"/><path d="M64 48.8h78" stroke="#f2ece2" stroke-width="1.1"/><rect x="5" y="53.00" width="9.8" height="2.9" fill="#e9dfc8"/><rect x="5" y="55.87" width="9.8" height="2.9" fill="#b7a98c"/><rect x="5" y="58.74" width="9.8" height="2.9" fill="#6b5a3e"/><rect x="5" y="61.61" width="9.8" height="2.9" fill="#d9822e"/><rect x="5" y="64.48" width="9.8" height="2.9" fill="#c9a36a"/><rect x="5" y="67.35" width="9.8" height="2.9" fill="#efe6cf"/><rect x="5" y="70.22" width="9.8" height="2.9" fill="#9b8d3a"/><rect x="5" y="73.09" width="9.8" height="2.9" fill="#e4d6b4"/><rect x="5" y="75.96" width="9.8" height="2.9" fill="#7d6a4a"/><rect x="14.8" y="53.7" width="117.4" height="25.1" fill="#5c5649"/><rect x="132.5" y="53" width="18.3" height="25.8" fill="#a27b4e"/><rect x="136.6" y="66.6" width="3.1" height="1.4" fill="#8d6840"/><rect x="142.8" y="55.1" width="2.0" height="1.4" fill="#8d6840"/><rect x="136.9" y="59.1" width="5.0" height="1.4" fill="#8d6840"/><rect x="141.5" y="66.7" width="3.2" height="1.4" fill="#7a5532"/><rect x="136.5" y="57.1" width="4.8" height="1.4" fill="#8d6840"/><rect x="144.7" y="69.6" width="2.2" height="1.4" fill="#c9a06a"/><rect x="137.6" y="54.2" width="4.6" height="1.4" fill="#8d6840"/><rect x="142.3" y="75.6" width="3.2" height="1.4" fill="#8d6840"/><rect x="139.1" y="72.7" width="3.3" height="1.4" fill="#7a5532"/><rect x="146.9" y="55.8" width="2.4" height="1.4" fill="#7a5532"/><rect x="136.9" y="69.6" width="4.3" height="1.4" fill="#b88a56"/><rect x="139.5" y="73.5" width="3.7" height="1.4" fill="#8d6840"/><rect x="142.1" y="75.2" width="4.0" height="1.4" fill="#c9a06a"/><rect x="146.5" y="77.3" width="4.0" height="1.4" fill="#7a5532"/><rect x="144.0" y="61.3" width="3.6" height="1.4" fill="#c9a06a"/><rect x="144.2" y="58.6" width="4.5" height="1.4" fill="#b88a56"/><rect x="137.4" y="55.0" width="4.6" height="1.4" fill="#8d6840"/><rect x="134.2" y="72.7" width="3.2" height="1.4" fill="#7a5532"/><rect x="133.1" y="63.8" width="3.2" height="1.4" fill="#c9a06a"/><rect x="133.5" y="68.2" width="2.1" height="1.4" fill="#b88a56"/><rect x="141.6" y="75.6" width="2.8" height="1.4" fill="#7a5532"/><rect x="148.8" y="60.9" width="2.2" height="1.4" fill="#c9a06a"/><text x="36.5" y="72" font-size="15" font-style="italic" textLength="84" lengthAdjust="spacingAndGlyphs"><tspan fill="#fff">on</tspan><tspan fill="#cdbb46">l</tspan><tspan fill="#e0902f">o</tspan><tspan fill="#fff">ca</tspan><tspan fill="#d8b98f">t</tspan><tspan fill="#d6c23a">i</tspan><tspan fill="#e6dcc6">on</tspan></text><rect x="5" y="80.4" width="52.6" height="77" fill="#f1eadc"/><path d="M9.5 83.8h16" stroke="#8a8240" stroke-width="1.2"/><path d="M25.5 83.8h4" stroke="#c9b93c" stroke-width="1"/><text x="9.3" y="94.3" font-size="4.6" font-style="italic" fill="#8a8234" textLength="41" lengthAdjust="spacingAndGlyphs">How to Sell Your Home</text><text x="9.3" y="100.0" font-size="4.6" font-style="italic" fill="#8a8234" textLength="36" lengthAdjust="spacingAndGlyphs">During an Economic</text><text x="9.3" y="105.7" font-size="4.6" font-style="italic" fill="#8a8234" textLength="18" lengthAdjust="spacingAndGlyphs">Downturn</text><path d="M9.3 110.5h42M9.3 113.6h43M9.3 116.7h41M9.3 119.8h43M9.3 122.9h36M9.3 128.0h43M9.3 131.1h42M9.3 134.2h43M9.3 137.3h41M9.3 140.4h43M9.3 143.5h42M9.3 146.6h44M9.3 149.7h18" stroke="#a49e8c" stroke-width="1"/><path d="M9.3 149h27M9.3 152.6h30" stroke="#3a3a30" stroke-width="1.1"/><clipPath id="nls"><rect x="5" y="158.3" width="52.6" height="36"/></clipPath><g clip-path="url(#nls)"><rect x="5" y="158.3" width="52.6" height="36" fill="#3f5a2c"/><rect x="5" y="158.3" width="52.6" height="10" fill="#9db08a"/><rect x="38" y="160" width="20" height="14" fill="#cfd6c0"/><rect x="44" y="174" width="14" height="20" fill="#27381c"/><path d="M15 160 l3 -1 l2 36 h-3z" fill="#e8e4dc"/><path d="M12 163 l28 6 l-.5 2.5 l-28 -6z" fill="#e8e4dc"/><path d="M16.5 169.5 l22 3.5 l-1 16 l-22 -3.5z" fill="#f4f1ec"/><text x="27" y="178.5" font-family="Liberation Serif, serif" font-size="4.2" font-weight="bold" fill="#c22" text-anchor="middle" transform="rotate(8 27 178)">FOR</text><text x="26.5" y="185.5" font-family="Liberation Serif, serif" font-size="7" font-weight="bold" fill="#c22" text-anchor="middle" transform="rotate(8 26 185)" textLength="18" lengthAdjust="spacingAndGlyphs">SALE</text></g><text x="63.3" y="90.5" font-size="8.2" font-style="italic" fill="#222" textLength="71" lengthAdjust="spacingAndGlyphs">Creating Curb Appeal</text><text x="63.3" y="98.3" font-size="4.6" font-style="italic" fill="#9a9130" textLength="72" lengthAdjust="spacingAndGlyphs">Making a good first impression counts!</text><path d="M63.3 103.0h85M63.3 106.6h86M63.3 110.2h84M63.3 119.4h41M109.5 119.4h41.5M63.3 123.1h41M109.5 123.1h41.5M63.3 126.9h41M109.5 126.9h41.5M63.3 130.6h41M122 130.6h29M63.3 134.3h30M122 134.3h29M63.3 138.1h30M122 138.1h29M63.3 141.8h30M122 141.8h29M63.3 145.5h30M122 145.5h29M63.3 149.2h30M122 149.2h29M63.3 153.0h30M122 153.0h29M63.3 156.7h30M122 156.7h29M63.3 160.4h41M109.5 160.4h41.5M63.3 164.2h41M109.5 164.2h41.5M63.3 167.9h41M109.5 167.9h41.5M63.3 171.6h41M109.5 171.6h41.5M63.3 175.4h41M109.5 175.4h41.5M63.3 179.1h41M109.5 179.1h41.5M63.3 182.8h41M109.5 182.8h41.5M63.3 186.5h41M109.5 186.5h41.5M63.3 190.3h24M109.5 190.3h33" stroke="#a8a8a8" stroke-width="1"/><path d="M97.5 134.0h17M98.5 138.8h15M96 143.5h20M96.5 148.2h19M97.5 153.0h17" stroke="#e39a4a" stroke-width="1.1"/></svg></div>
<div class="a" style="left:209px;top:686px;width:156px;height:200px;background:#fff;border:1px solid #d6d6d6;overflow:hidden"><svg class="a" style="left:0;top:0" width="154" height="198" viewBox="0 0 154 198" font-family="Liberation Sans, sans-serif" ><g text-anchor="end"><text x="136" y="57.3" font-size="4.6" fill="#3f7ec5" textLength="32.5" lengthAdjust="spacingAndGlyphs">Company Name</text><text x="132.5" y="75.6" font-size="8.6" fill="#484848" textLength="46.5" lengthAdjust="spacingAndGlyphs">replace with</text><text x="134" y="91" font-size="16.6" fill="#111" textLength="48.5" lengthAdjust="spacingAndGlyphs">LOGO</text><text x="136" y="110.5" font-size="6.2" fill="#3f7ec5" textLength="54" lengthAdjust="spacingAndGlyphs">ELEVATOR SPEECH</text><text x="136" y="123.2" font-size="2.9" fill="#555" textLength="19" lengthAdjust="spacingAndGlyphs">VERSION 0.0</text><text x="136" y="130" font-size="2.9" fill="#555" textLength="8.5" lengthAdjust="spacingAndGlyphs">DATE</text><text x="136" y="143.7" font-size="4.3" fill="#3f7ec5" textLength="27" lengthAdjust="spacingAndGlyphs">Presented by</text><text x="136" y="150.7" font-size="4.3" fill="#3f7ec5" textLength="22.5" lengthAdjust="spacingAndGlyphs">Your Name</text></g></svg></div>
<div class="a" style="left:429px;top:686px;width:156px;height:200px;background:#fff;border:1px solid #d6d6d6;overflow:hidden"></div>
<div class="a" style="left:869px;top:686px;width:156px;height:200px;background:#fff;border:1px solid #d6d6d6;overflow:hidden"></div>
<div class="a" style="left:627px;top:730px;width:200px;height:156px;background:#fff;border:1px solid #d6d6d6"></div>
<div class="a" style="left:1089px;top:686px;width:156px;height:200px;background:#e5e6e8;border:1px solid #d6d6d6;overflow:hidden"></div>
<div class="a" style="left:1309px;top:686px;width:156px;height:200px;background:#e5e6e8;border:1px solid #d6d6d6;overflow:hidden"><svg class="a" style="left:0;top:0" width="154" height="198" viewBox="0 0 154 198" font-family="Liberation Sans, sans-serif" ><path d="M0 38.5H42M8 38.5V29.5H45M17 29.5V20.5H52" fill="none" stroke="#d6d7d9" stroke-width="1"/><path d="M120.5 110V198M120.5 190.5H129.5V110M129.5 181.5H137.5V100" fill="none" stroke="#d9dadc" stroke-width="1"/><clipPath id="dbc"><circle cx="98.2" cy="56" r="55"/></clipPath><g clip-path="url(#dbc)"><rect x="40" y="0" width="120" height="115" fill="#fff"/><rect x="138" y="0" width="30" height="115" fill="#e5e6e8"/><rect x="40" y="0" width="120" height="7.5" fill="#e5e6e8"/><path d="M52 27H120.5V115M120.5 7.5H138" fill="none" stroke="#e6e6e6" stroke-width="1"/><path d="M44 47 L50.5 47.5 L64 81 L100.5 85.5 V115 M50.5 47.5 L100.5 85.5" fill="none" stroke="#e2e2e2" stroke-width="1"/></g><circle cx="98.2" cy="56" r="55.3" fill="none" stroke="#5b7fba" stroke-width="1"/><text x="110.8" y="44.6" font-size="18.5" fill="#111" text-anchor="middle">1</text><text x="128" y="25.7" font-size="18.5" fill="#111" text-anchor="middle">2</text></svg></div>
<div class="a" style="left:429px;top:937px;width:156px;height:39px;background:#fff;border:1px solid #d6d6d6;border-bottom:0;overflow:hidden"><svg class="a" style="left:0;top:0" width="154" height="40" viewBox="0 0 154 40" font-family="Liberation Sans, sans-serif" ><rect x="2.8" y="2.8" width="4.8" height="40" fill="#b51f3a"/><rect x="2.8" y="2.8" width="1" height="40" fill="#222"/><rect x="52.6" y="2.8" width="9" height="40" fill="#1c1c1c"/><circle cx="57.1" cy="5" r="1.8" fill="none" stroke="#aaa" stroke-width=".7"/><circle cx="57.1" cy="10" r="1.8" fill="none" stroke="#aaa" stroke-width=".7"/><circle cx="57.1" cy="15" r="1.8" fill="none" stroke="#aaa" stroke-width=".7"/><circle cx="57.1" cy="20" r="1.8" fill="none" stroke="#aaa" stroke-width=".7"/><circle cx="57.1" cy="25" r="1.8" fill="none" stroke="#aaa" stroke-width=".7"/><circle cx="57.1" cy="30" r="1.8" fill="none" stroke="#aaa" stroke-width=".7"/><circle cx="57.1" cy="35" r="1.8" fill="none" stroke="#aaa" stroke-width=".7"/><circle cx="57.1" cy="40" r="1.8" fill="none" stroke="#aaa" stroke-width=".7"/><rect x="102.6" y="2.8" width="9" height="40" fill="#1c1c1c"/><circle cx="107.1" cy="5" r="1.8" fill="none" stroke="#aaa" stroke-width=".7"/><circle cx="107.1" cy="10" r="1.8" fill="none" stroke="#aaa" stroke-width=".7"/><circle cx="107.1" cy="15" r="1.8" fill="none" stroke="#aaa" stroke-width=".7"/><circle cx="107.1" cy="20" r="1.8" fill="none" stroke="#aaa" stroke-width=".7"/><circle cx="107.1" cy="25" r="1.8" fill="none" stroke="#aaa" stroke-width=".7"/><circle cx="107.1" cy="30" r="1.8" fill="none" stroke="#aaa" stroke-width=".7"/><circle cx="107.1" cy="35" r="1.8" fill="none" stroke="#aaa" stroke-width=".7"/><circle cx="107.1" cy="40" r="1.8" fill="none" stroke="#aaa" stroke-width=".7"/><text x="16.5" y="15.5" font-family="Liberation Serif, serif" font-style="italic" font-size="5" fill="#333" textLength="19" lengthAdjust="spacingAndGlyphs">Your Name</text><path d="M16.5 18h17M16.5 20.4h20M16.5 22.8h10" stroke="#777" stroke-width=".9"/><text x="16.5" y="33.5" font-family="Liberation Serif, serif" font-style="italic" font-size="5" fill="#333" textLength="19" lengthAdjust="spacingAndGlyphs">Your Name</text><path d="M16.5 36h17M16.5 38.4h20M16.5 40.8h10" stroke="#777" stroke-width=".9"/><text x="66.5" y="15.5" font-family="Liberation Serif, serif" font-style="italic" font-size="5" fill="#333" textLength="19" lengthAdjust="spacingAndGlyphs">Your Name</text><path d="M66.5 18h17M66.5 20.4h20M66.5 22.8h10" stroke="#777" stroke-width=".9"/><text x="66.5" y="33.5" font-family="Liberation Serif, serif" font-style="italic" font-size="5" fill="#333" textLength="19" lengthAdjust="spacingAndGlyphs">Your Name</text><path d="M66.5 36h17M66.5 38.4h20M66.5 40.8h10" stroke="#777" stroke-width=".9"/><text x="116.5" y="15.5" font-family="Liberation Serif, serif" font-style="italic" font-size="5" fill="#333" textLength="19" lengthAdjust="spacingAndGlyphs">Your Name</text><path d="M116.5 18h17M116.5 20.4h20M116.5 22.8h10" stroke="#777" stroke-width=".9"/><text x="116.5" y="33.5" font-family="Liberation Serif, serif" font-style="italic" font-size="5" fill="#333" textLength="19" lengthAdjust="spacingAndGlyphs">Your Name</text><path d="M116.5 36h17M116.5 38.4h20M116.5 40.8h10" stroke="#777" stroke-width=".9"/></svg></div>
<div class="a" style="left:869px;top:937px;width:156px;height:39px;overflow:hidden;border:1px solid #d6d6d6;border-bottom:0"><svg class="a" style="left:0;top:0" width="154" height="40" viewBox="0 0 154 40" font-family="Liberation Sans, sans-serif" ><rect width="154" height="60" fill="#8d7a4b"/><path d="M0 0H154L96 36H58Z" fill="#101a3c"/><path d="M0 26 L77 40 L154 26 V31 L77 44 L0 31Z" fill="#d2a92e"/><path d="M0 40 L77 41 L0 46Z M154 40 L77 41 L154 46Z" fill="#a88d45"/><circle cx="77" cy="38" r="7" fill="#fff7d8"/><path d="M70 38h14" stroke="#f2c230" stroke-width="1.5"/><path d="M42 9.4 L42.648 12.352 L45.6 13 L42.648 13.648 L42 16.6 L41.352 13.648 L38.4 13 L41.352 12.352Z" fill="#f2c230"/><path d="M114 5.8 L114.936 10.064 L119.2 11 L114.936 11.936 L114 16.2 L113.064 11.936 L108.8 11 L113.064 10.064Z" fill="#f2c230"/><path d="M76 7.1 L76.432 9.068 L78.4 9.5 L76.432 9.932 L76 11.9 L75.568 9.932 L73.6 9.5 L75.568 9.068Z" fill="#f2c230"/><path d="M12 15.5 L12.36 17.14 L14 17.5 L12.36 17.86 L12 19.5 L11.64 17.86 L10 17.5 L11.64 17.14Z" fill="#f2c230"/><path d="M60 23.7 L60.324 25.176 L61.8 25.5 L60.324 25.824 L60 27.3 L59.676 25.824 L58.2 25.5 L59.676 25.176Z" fill="#f2c230"/><path d="M93 26.2 L93.324 27.676 L94.8 28 L93.324 28.324 L93 29.8 L92.676 28.324 L91.2 28 L92.676 27.676Z" fill="#f2c230"/><path d="M123 24 L123.36 25.64 L125 26 L123.36 26.36 L123 28 L122.64 26.36 L121 26 L122.64 25.64Z" fill="#f2c230"/><path d="M145 31 L145.54 33.46 L148 34 L145.54 34.54 L145 37 L144.46 34.54 L142 34 L144.46 33.46Z" fill="#f2c230"/></svg></div>
<div class="t" style="left:209.6px;top:394px;font-size:12.5px;line-height:14px;color:#262626;letter-spacing:-0.47px;-webkit-text-stroke:0.45px #262626;">Business event postcards (...</div>
<div class="t" style="left:1309.6px;top:394px;font-size:12.5px;line-height:14px;color:#262626;letter-spacing:-0.28px;-webkit-text-stroke:0.45px #262626;">World&#x27;s best dad card (2 p...</div>
<div class="t" style="left:237.8px;top:645px;font-size:12.5px;line-height:14px;color:#262626;letter-spacing:-0.33px;-webkit-text-stroke:0.45px #262626;">Event flyer (4-up)</div>
<div class="t" style="left:1310.3px;top:645px;font-size:12.5px;line-height:14px;color:#262626;letter-spacing:-0.43px;-webkit-text-stroke:0.45px #262626;">Real estate newsletter (4 p...</div>
<div class="t" style="left:241.9px;top:896px;font-size:12.5px;line-height:14px;color:#262626;letter-spacing:-0.54px;-webkit-text-stroke:0.45px #262626;">Elevator speech</div>
<div class="t" style="left:458.0px;top:896px;font-size:12.5px;line-height:14px;color:#262626;letter-spacing:-0.57px;-webkit-text-stroke:0.45px #262626;">Rip Your Rewards</div>
<div class="t" style="left:650.2px;top:896px;font-size:12.5px;line-height:14px;color:#262626;letter-spacing:-0.31px;-webkit-text-stroke:0.45px #262626;">Technology business broc...</div>
<div class="t" style="left:873.4px;top:896px;font-size:12.5px;line-height:14px;color:#262626;letter-spacing:-0.43px;-webkit-text-stroke:0.45px #262626;">Real estate poster (vertical)</div>
<div class="t" style="left:1126.6px;top:896px;font-size:12.5px;line-height:14px;color:#262626;letter-spacing:-0.63px;-webkit-text-stroke:0.45px #262626;">Business Flyer</div>
<div class="t" style="left:1311.9px;top:896px;font-size:12.5px;line-height:14px;color:#262626;letter-spacing:-0.30px;-webkit-text-stroke:0.45px #262626;">Double-sided cover-page...</div>

<!-- modal -->
<div class="a" style="left:370px;top:244px;width:937px;height:639px;background:#fff;border:1px solid #2b579a;box-shadow:2px 2px 4px rgba(0,0,0,.42),0 0 3px rgba(0,0,0,.3)"></div>
<svg class="a" style="left:1276px;top:253px" width="14" height="14" viewBox="0 0 14 14"><path d="M2 2 L12 12 M12 2 L2 12" stroke="#333" stroke-width="1.1" fill="none"/></svg>
<svg class="a" style="left:390px;top:574px" width="32" height="30" viewBox="0 0 32 30"><path d="M30 15.500 H2.800 M15 3 L2.700 15.500 L15 27.800" stroke="#333" stroke-width="1.150" fill="none"/></svg>
<svg class="a" style="left:1255px;top:574px" width="32" height="30" viewBox="0 0 32 30"><path d="M2 15.500 H29.500 M17.200 3 L29.600 15.500 L17.200 27.800" stroke="#333" stroke-width="1.150" fill="none"/></svg>
<div class="t" style="left:920.7px;top:334px;font-size:21.6px;line-height:25px;color:#303030;letter-spacing:-0.52px;-webkit-text-stroke:.5px #fff;">Eighties Valentine&#x27;s Day flyer</div>
<div class="t" style="left:921.0px;top:368px;font-size:12px;line-height:14px;color:#666;letter-spacing:-0.02px;">Provided by:</div>
<div class="t" style="left:998.0px;top:368px;font-size:12px;line-height:14px;color:#1f4e8f;letter-spacing:0.18px;">Microsoft Corporation</div>
<div class="t" style="left:921.0px;top:398px;font-size:12px;line-height:14px;color:#1e1e1e;letter-spacing:-0.05px;">Get the word out about your Valentine&#x27;s Day party</div>
<div class="t" style="left:921.0px;top:414px;font-size:12px;line-height:14px;color:#1e1e1e;letter-spacing:-0.01px;">with this 80&#x27;s-themed flyer. Includes all relevant</div>
<div class="t" style="left:921.0px;top:430px;font-size:12px;line-height:14px;color:#1e1e1e;letter-spacing:-0.14px;">fields and is fully customizable. This is an accessible</div>
<div class="t" style="left:921.0px;top:446px;font-size:12px;line-height:14px;color:#1e1e1e;letter-spacing:0.07px;">template.</div>
<div class="t" style="left:921.0px;top:491px;font-size:12px;line-height:14px;color:#5e5e5e;letter-spacing:-0.21px;">Download size:</div>
<div class="t" style="left:1011.3px;top:491px;font-size:12px;line-height:14px;color:#5e5e5e;letter-spacing:-0.81px;">187 KB</div>
<div class="a" style="left:921px;top:534px;width:82px;height:82px;border:1px solid #2b579a;background:#fff"></div>
<div class="a" style="left:924px;top:537px;width:76px;height:76px;background:#124078"></div>
<svg class="a" style="left:944px;top:549px" width="32" height="34" viewBox="0 0 32 34"><path d="M7.5 4.5 H20 L27.5 12 V31.5 H7.5 Z" fill="#ededed" stroke="#8d8378" stroke-width="1"/><path d="M20 4.5 V12 H27.5" fill="#dcdcdc" stroke="#8d8378" stroke-width="1"/><circle cx="8" cy="8" r="4.6" fill="#124078"/><g stroke="#f6c85f" stroke-width="1.5"><path d="M8 1.5V14.5M1.5 8H14.5M3.4 3.4L12.6 12.6M12.6 3.4L3.4 12.6"/></g><circle cx="8" cy="8" r="2.2" fill="#124078"/></svg>
<div class="t" style="left:944.6px;top:587px;font-size:12px;line-height:14px;color:#fff;letter-spacing:-0.25px;">Create</div>
<svg class="a" style="left:494px;top:339px" width="391" height="507" preserveAspectRatio="none" viewBox="0 0 390 506" font-family="Liberation Sans, sans-serif">
<defs>
<linearGradient id="fbg" x1="0" y1="0" x2="0" y2="1">
<stop offset="0" stop-color="#e6077f"/><stop offset=".22" stop-color="#e01c88"/><stop offset=".42" stop-color="#bf4093"/><stop offset=".55" stop-color="#a44f99"/><stop offset=".68" stop-color="#7e5c9c"/><stop offset=".8" stop-color="#5b66a0"/><stop offset=".86" stop-color="#4a6aa6"/><stop offset="1" stop-color="#3d6fae"/></linearGradient>
<linearGradient id="fsky" x1="0" y1="0" x2="0" y2="1"><stop offset="0" stop-color="#2b2c5e"/><stop offset=".42" stop-color="#26274f"/><stop offset=".58" stop-color="#1c1e3c"/><stop offset=".8" stop-color="#131428"/><stop offset="1" stop-color="#09090e"/></linearGradient>
<linearGradient id="fheart" gradientUnits="userSpaceOnUse" x1="0" y1="143" x2="0" y2="334"><stop offset="0" stop-color="#f02a9d"/><stop offset=".2" stop-color="#fa6cc0"/><stop offset=".35" stop-color="#fba8c8"/><stop offset=".45" stop-color="#fdd99a"/><stop offset=".53" stop-color="#fdf272"/><stop offset=".68" stop-color="#f4f56e"/><stop offset=".76" stop-color="#b5e888"/><stop offset=".86" stop-color="#86dca0"/><stop offset="1" stop-color="#4fcfc0"/></linearGradient>
<linearGradient id="fgrid" gradientUnits="userSpaceOnUse" x1="0" y1="93" x2="0" y2="373"><stop offset="0" stop-color="#2f8cf0"/><stop offset=".42" stop-color="#2f8cf0"/><stop offset=".58" stop-color="#f0209a"/><stop offset="1" stop-color="#f0209a"/></linearGradient>
<linearGradient id="fgridh" gradientUnits="userSpaceOnUse" x1="56" y1="0" x2="272" y2="0"><stop offset="0" stop-color="#f52aa2" stop-opacity=".85"/><stop offset=".6" stop-color="#e538a8"/><stop offset=".85" stop-color="#6a78d8"/><stop offset="1" stop-color="#3b8de0"/></linearGradient>
<linearGradient id="fblue" gradientUnits="userSpaceOnUse" x1="250" y1="120" x2="110" y2="230"><stop offset="0" stop-color="#1e86d8"/><stop offset=".5" stop-color="#6a5cc0" stop-opacity=".85"/><stop offset="1" stop-color="#e0309a" stop-opacity=".2"/></linearGradient>
<linearGradient id="flblue" gradientUnits="userSpaceOnUse" x1="300" y1="115" x2="200" y2="374"><stop offset="0" stop-color="#c6e6fb"/><stop offset=".38" stop-color="#b8d8f4"/><stop offset=".6" stop-color="#a88fd0" stop-opacity=".8"/><stop offset="1" stop-color="#9a6ec0" stop-opacity=".75"/></linearGradient>
<linearGradient id="fpink" gradientUnits="userSpaceOnUse" x1="30" y1="200" x2="178" y2="378"><stop offset="0" stop-color="#ee1f90"/><stop offset=".6" stop-color="#e863ae"/><stop offset="1" stop-color="#e79cc8"/></linearGradient>
<radialGradient id="fglow"><stop offset="0" stop-color="#fff" stop-opacity=".13"/><stop offset="1" stop-color="#fff" stop-opacity="0"/></radialGradient>
<clipPath id="fstripes"><rect x="0" y="0" width="390" height="243.8"/><rect x="0" y="245.8" width="390" height="8.6"/><rect x="0" y="258.2" width="390" height="6.8"/><rect x="0" y="268.6" width="390" height="9.9"/><rect x="0" y="283" width="390" height="7.8"/><rect x="0" y="299.8" width="390" height="9.2"/><rect x="0" y="322.5" width="390" height="12"/></clipPath>
</defs>
<rect width="390" height="506" fill="url(#fbg)"/>
<circle cx="66.6" cy="42.3" r="22" fill="url(#fglow)"/><circle cx="66.6" cy="42.3" r="1.8" fill="#fff"/>
<circle cx="92.6" cy="74" r="16" fill="url(#fglow)"/><circle cx="92.6" cy="74" r="1.4" fill="#fff"/>
<circle cx="225" cy="66" r="18" fill="url(#fglow)"/><circle cx="225" cy="66" r="1.4" fill="#fff"/>
<circle cx="35" cy="276.6" r="28" fill="url(#fglow)"/><circle cx="35" cy="276.6" r="1.6" fill="#fff"/>
<circle cx="291" cy="328.5" r="20" fill="url(#fglow)"/><circle cx="291" cy="328.5" r="1.6" fill="#fff"/>
<circle cx="76" cy="345" r="14" fill="url(#fglow)"/><circle cx="76" cy="345" r="1.0" fill="#fff"/>
<polygon points="16,199 150,160 283,215 178,378" fill="url(#fpink)"/>
<path d="M56.0,93.0L268.0,108.0M57.7,110.4L268.2,120.3M59.5,127.5L268.5,132.4M61.1,144.3L268.7,144.2M62.8,160.6L269.0,155.8M64.4,176.6L269.2,167.1M65.9,192.2L269.4,178.2M67.5,207.5L269.6,189.0M68.9,222.4L269.8,199.5M70.4,237.0L270.1,209.8M71.8,251.1L270.3,219.8M73.2,265.0L270.5,229.6M74.5,278.4L270.6,239.1M75.9,291.5L270.8,248.4M77.1,304.2L271.0,257.4M78.4,316.6L271.2,266.1M79.6,328.6L271.4,274.6M80.7,340.3L271.5,282.8M81.9,351.5L271.7,290.8M82.9,362.4L271.8,298.5M84.0,373.0L272.0,306.0" fill="none" stroke="url(#fgridh)" stroke-width=".7"/>
<path d="M56.0,93.0L84.0,373.0M73.2,94.2L99.2,367.6M89.8,95.4L114.0,362.3M105.8,96.5L128.2,357.3M121.2,97.6L141.8,352.4M136.0,98.7L155.0,347.7M150.3,99.7L167.6,343.2M163.9,100.6L179.7,338.9M177.0,101.6L191.3,334.8M189.5,102.4L202.3,330.8M201.3,103.3L212.9,327.1M212.6,104.1L222.9,323.5M223.3,104.8L232.4,320.1M233.4,105.6L241.4,316.9M243.0,106.2L249.8,313.9M251.9,106.9L257.7,311.1M260.2,107.5L265.1,308.5M268.0,108.0L272.0,306.0" fill="none" stroke="url(#fgrid)" stroke-width="1.150"/>
<polygon points="243,136 337,111 200,374" fill="url(#flblue)"/>
<polygon points="247.600,118.800 229,244 127,228 135,147" fill="url(#fblue)"/>
<path clip-path="url(#fstripes)" fill="url(#fheart)" d="M167,172 C155,150 132,143 112,143 C80,143 59,170 59,205 C59,223 65,235 76,245.700 L167,334 L258,245.700 C269,235 276,223 276,205 C276,170 254,143 222,143 C202,143 179,150 167,172Z"/>
<polygon points="247.600,118.800 229,244 127,228 167,169 190,133" fill="url(#fblue)" opacity=".55"/>
<polygon points="236,200 283,215 200,374 178,378 130,225" fill="#d070c0" opacity=".0"/>
<path transform="translate(161.4,70.5) scale(0.6)" d="M0,9.5 C-4,6 -11.5,1.5 -11.5,-4 C-11.5,-7.5 -9,-9.5 -6,-9.5 C-3.5,-9.5 -1,-8 0,-5.5 C1,-8 3.5,-9.5 6,-9.5 C9,-9.5 11.5,-7.5 11.5,-4 C11.5,1.5 4,6 0,9.5Z" fill="#ffee00"/>
<path transform="translate(50.5,119.8) scale(1.0)" d="M0,9.5 C-4,6 -11.5,1.5 -11.5,-4 C-11.5,-7.5 -9,-9.5 -6,-9.5 C-3.5,-9.5 -1,-8 0,-5.5 C1,-8 3.5,-9.5 6,-9.5 C9,-9.5 11.5,-7.5 11.5,-4 C11.5,1.5 4,6 0,9.5Z" fill="#ffee00"/>
<path transform="translate(283.3,305.5) scale(0.75)" d="M0,9.5 C-4,6 -11.5,1.5 -11.5,-4 C-11.5,-7.5 -9,-9.5 -6,-9.5 C-3.5,-9.5 -1,-8 0,-5.5 C1,-8 3.5,-9.5 6,-9.5 C9,-9.5 11.5,-7.5 11.5,-4 C11.5,1.5 4,6 0,9.5Z" fill="#ffee00"/>
<rect x="129.600" y="98.700" width="131.100" height="19" fill="#ffe800"/>
<text x="195.200" y="113.700" text-anchor="middle" font-size="14.600" font-weight="bold" font-style="italic" fill="#000" textLength="120" lengthAdjust="spacingAndGlyphs">Alstrom Presents</text>
<g fill="#2a2b5b">
<circle cx="237.5" cy="355.2" r="3.2"/>
<circle cx="331.6" cy="363.4" r="4.2"/>
<circle cx="379.4" cy="347.8" r="2"/>
<circle cx="372.5" cy="341.9" r="1.6"/>
<circle cx="366.3" cy="372.6" r="2.2"/>
<circle cx="378.7" cy="372.6" r="2.4"/>
<circle cx="373.0" cy="379.0" r="2.4"/>
<circle cx="350.2" cy="369.1" r="1.8"/>
<circle cx="360.1" cy="379.5" r="1.8"/>
<circle cx="209.0" cy="405.5" r="5"/>
<circle cx="215.2" cy="399.8" r="4.5"/>
<circle cx="202.8" cy="417.9" r="5"/>
<circle cx="40.6" cy="421.1" r="3"/>
<circle cx="292.0" cy="409.2" r="3"/>
<circle cx="235.8" cy="379.5" r="1.2"/>
<circle cx="41.8" cy="359.2" r="1.4"/>
<circle cx="315.5" cy="364.7" r="1.4"/>
<circle cx="320.5" cy="359.7" r="1.2"/>
<circle cx="335.3" cy="349.8" r="1.2"/>
<circle cx="154.5" cy="382.0" r="1.5"/>
<circle cx="160.7" cy="369.6" r="1.2"/>
<circle cx="13.3" cy="411.7" r="1.5"/>
<circle cx="19.5" cy="409.2" r="1.2"/>
<circle cx="386.1" cy="419.1" r="4"/>
<circle cx="387.3" cy="436.5" r="5"/>
<circle cx="5.9" cy="416.7" r="2"/>
<circle cx="10.9" cy="413.0" r="1.5"/>
<circle cx="20.8" cy="411.7" r="1.8"/>
<circle cx="25.7" cy="416.2" r="1.6"/>
<circle cx="3.4" cy="404.3" r="1.2"/>
<circle cx="33.2" cy="401.8" r="1"/>
<circle cx="367.5" cy="349.8" r="1.6"/>
<circle cx="382.4" cy="359.7" r="1.4"/>
<circle cx="355.1" cy="379.5" r="2"/>
<circle cx="342.7" cy="359.7" r="1.2"/>
<circle cx="387.3" cy="394.4" r="3"/>
<circle cx="388.6" cy="409.2" r="3.5"/>
<circle cx="327.9" cy="374.6" r="1.5"/>
<circle cx="303.1" cy="369.6" r="1.2"/>
<circle cx="295.7" cy="379.5" r="1.4"/>
<circle cx="283.3" cy="409.2" r="2.5"/>
<circle cx="280.8" cy="416.7" r="3"/>
<circle cx="199.1" cy="394.4" r="2"/>
<circle cx="194.1" cy="409.2" r="3.5"/>
<circle cx="211.5" cy="391.9" r="2.5"/>
</g>
<polygon points="-4.0,416.7 28.2,416.7 28.2,422.9 45.5,422.9 45.5,415.4 62.9,415.4 62.9,403.0 72.8,403.0 72.8,419.1 81.4,419.1 81.4,353.5 91.4,353.5 91.4,359.7 105.0,359.7 105.0,394.4 114.9,399.3 121.1,390.7 127.3,399.3 127.3,416.7 131.0,416.7 131.0,387.4 158.2,387.4 158.2,434.0 160.7,434.0 160.7,415.4 183.0,415.4 183.0,424.1 206.5,424.1 206.5,409.2 214.0,409.2 214.0,390.7 249.9,390.7 249.9,419.1 253.6,419.1 253.6,356.0 264.0,356.0 264.0,374.6 272.9,374.6 272.9,362.2 288.8,362.2 288.8,419.1 298.2,419.1 298.2,390.7 310.1,390.7 310.1,419.1 313.5,419.1 313.5,395.6 342.7,395.6 342.7,419.1 345.2,419.1 345.2,383.2 381.1,383.2 381.1,419.1 392.3,419.1 390,506 0,506" fill="url(#fsky)"/>
<g font-family="Liberation Serif, serif" font-weight="bold" font-style="italic" fill="#000" stroke="#000" stroke-linejoin="round">
<text x="40" y="215" font-size="66" stroke-width="2.6" textLength="318" lengthAdjust="spacingAndGlyphs">Valentine’s</text>
<text x="106" y="278" font-size="66" stroke-width="2.6" textLength="179" lengthAdjust="spacingAndGlyphs">Party</text>
</g>
<g font-size="11.4" fill="#fff">
<text x="137.1" y="467.8" textLength="116.9" lengthAdjust="spacingAndGlyphs"><tspan font-weight="bold">Where:</tspan> The Ballroom</text>
<text x="126.8" y="482.4" textLength="136.7" lengthAdjust="spacingAndGlyphs"><tspan font-weight="bold">When:</tspan> DD MMMM YYYY</text>
<text x="116.3" y="496.7" textLength="158.1" lengthAdjust="spacingAndGlyphs"><tspan font-weight="bold">Dress-code:</tspan> Dress to Impress</text>
</g>
<rect x=".5" y=".5" width="389" height="505" fill="none" stroke="#a4b0ab" stroke-opacity=".85"/>
</svg>

<!-- taskbar -->
<div class="a" style="left:0;top:1010px;width:1678px;height:40px;background:linear-gradient(90deg,#21353f 0%,#223842 25%,#1f3140 55%,#1c2b3e 75%,#1b2940 100%);overflow:hidden">
<svg class="a" style="left:13.0px;top:10.5px" width="18" height="18" viewBox="0 0 18 18"><path d="M1 3.4 L7.6 2.5 V8.5 H1Z M8.6 2.3 L17 1.1 V8.5 H8.6Z M1 9.5 H7.6 V15.5 L1 14.6Z M8.6 9.5 H17 V16.9 L8.6 15.7Z" fill="#fff"/></svg>
<div class="a" style="left:46px;top:1px;width:287px;height:39px;background:#f2f2f2;border-top:1px solid #d0d0d0;overflow:hidden"><svg class="a" style="left:0;top:0" width="287" height="39" viewBox="0 0 287 39"><path d="M207 39 Q240 29.500 287 29.500 V39Z" fill="#7fb55c"/><path d="M236 39 Q262 33 287 33.500 V39Z" fill="#6aa34d"/><g transform="translate(-38,-4.500) scale(1.150)"><g fill="#e6c584"><path d="M236.5 9 q2 -3 5.5 -2 q3 .6 3 4 l.2 4 q6 2 13 1.5 q6 -.5 8 3 l2 4 l-1.5 .7 l-2.5 -3 l-1 5 l2 7 h-2.2 l-3 -6.5 l-1 6.5 h-2.2 l-.6 -8 q-5 1 -9 -.5 l-.5 9.5 h-2.2 l-1 -9 l-1.5 9 h-2.2 l.4 -12 q-2 -3 -2 -7 l-3.5 -.6 l-.6 -2.2 l3 -1.6z"/></g><path d="M242 7.5 q2.5 1 2 6 l-2.5 -1.5z" fill="#c99a55"/><path d="M233.5 13.8 l1.2 3 l1.2 -2.6z" fill="#e0506a"/><circle cx="239.2" cy="9.8" r=".8" fill="#333"/><path d="M251 5.5 l3.5 0 l-4.5 11 l-2 -.5z" fill="none" stroke="#8fb1e0" stroke-width="1.3"/><path d="M243 17 q5 4 9 1 l0 3 q-5 2 -9 -1z" fill="#c08a4a"/><path d="M246 21.5 l3.5 -.5 l.5 3 l-3.5 .5z" fill="#8fb1e0"/></g><g fill="none" stroke="#222" stroke-width="1.5"><circle cx="21.3" cy="16.5" r="5.6"/><path d="M17.5 20.8 L11.5 27.3"/></g></svg><div class="t" style="left:40.0px;top:10px;font-size:15.5px;line-height:17px;color:#2b2b2b;letter-spacing:-0.53px;">Type here to search</div></div>
<svg class="a" style="left:348.0px;top:10.0px" width="20" height="18" viewBox="0 0 20 18"><g fill="none" stroke="#fff" stroke-width="1.6"><path d="M2.5 1.2H12.8M2.5 16.8H12.8"/><rect x="2.5" y="5" width="10.3" height="8"/><path d="M17 1v3M17 8v8" stroke-width="1.9"/><path d="M15 6.2h3.6" stroke-width="1.8"/></g></svg>
<svg class="a" style="left:396.0px;top:6.5px" width="26" height="26" viewBox="0 0 26 26"><defs><linearGradient id="eg1" x1="0" y1="0" x2="1" y2="1"><stop offset="0" stop-color="#2bc3d2"/><stop offset=".5" stop-color="#3cc87a"/><stop offset="1" stop-color="#1a9be0"/></linearGradient></defs><circle cx="13" cy="13" r="12" fill="#1b6fc8"/><path d="M1.2 12 C2 4 9 1 14 1 C21 1 25 6 25 11 C25 15 22 17 18 17 C15 17 15 15 16 13.5 C17 11 14 8 10.5 8.5 C6 9 3 13 4.5 18 C2 17 1 14 1.2 12Z" fill="url(#eg1)"/><path d="M4.5 18 C3 12 8 8 12 9.5 C9 11 8.5 15 11 18.5 C13.5 22 19 22 22.5 19.5 C20 24 14 26 9 24 C6.5 22.8 5 20.5 4.500 18Z" fill="#1450a8"/><path d="M16 13.500 C15 15 15 17 18 17 C15.500 18.500 12.500 17.500 12 15 C12 12.500 14.500 12 16 13.500Z" fill="#21353f"/></svg>
<div class="a" style="left:438px;top:0;width:40px;height:40px;background:#36484f"></div><div class="a" style="left:438px;top:0;width:6px;height:40px;background:#9b2430"></div><div class="a" style="left:438px;top:37.500px;width:40px;height:3px;background:#f00"></div><div class="a" style="left:470px;top:37.500px;width:8px;height:3px;background:#b01818"></div>
<svg class="a" style="left:445.5px;top:9.5px" width="24" height="20" viewBox="0 0 24 20"><path d="M1 3.500 H9 L11 1.500 H22.500 V18.500 H1Z" fill="#f2b530"/><path d="M1 5.500 H22.500 V18.500 H1Z" fill="#fcd768"/><path d="M5.500 18.500 V12 H18 V18.500 H14.500 V15.300 H9 V18.500Z" fill="#3d8fe0"/><path d="M1 3.500H9v1.300H1z" fill="#d99a18"/></svg>
<svg class="a" style="left:494.0px;top:6.5px" width="26" height="26" viewBox="0 0 26 26"><defs><radialGradient id="ff1" cx=".6" cy=".3" r=".8"><stop offset="0" stop-color="#ffe04a"/><stop offset=".45" stop-color="#ff8a1f"/><stop offset="1" stop-color="#e8235e"/></radialGradient></defs><path d="M13 2.500 C15 1 16.500 0 16.800 .2 C16.500 3 19 4.500 21.500 7 C24 9.500 25 12 25 14.500 C25 21 19.500 25.500 13 25.500 C6.500 25.500 1 21 1 14.500 C1 11 2.500 8 4 6.500 C4 8 4.500 9 5 9.500 C6 6 9 3.500 13 2.500Z" fill="url(#ff1)"/><circle cx="13.500" cy="14" r="6" fill="#7a3fd8"/><path d="M7.500 12 C9 10 12 10.500 13.500 12 C11.500 12 10.500 13.500 11 15.500 C11.500 17.500 14 18.500 16.500 17.500 C14.500 20.500 9.500 20 8 17 C7 15 7 13.500 7.500 12Z" fill="#ffb02e"/></svg>
<svg class="a" style="left:544.0px;top:6.5px" width="24" height="26" viewBox="0 0 24 26"><ellipse cx="12" cy="13" rx="11.500" ry="12.500" fill="#e0141f"/><ellipse cx="12" cy="13" rx="4.800" ry="9" fill="#21353f"/><path d="M12 .5 C17 .5 23.500 5 23.500 13 C23.500 21 17 25.500 12 25.500 C19 23 19 3 12 .5Z" fill="#a80f18" opacity=".55"/></svg>
<svg class="a" style="left:595.0px;top:7.0px" width="20" height="25" viewBox="0 0 20 25"><rect x=".7" y=".7" width="18.600" height="23.600" rx="1.500" fill="#8c9199" stroke="#6e737b" stroke-width=".8"/><rect x="3" y="2.800" width="14" height="5" fill="#5fd3f0"/><g fill="#dfe3e8"><rect x="3" y="10" width="3.800" height="3.500"/><rect x="8.100" y="10" width="3.800" height="3.500"/><rect x="13.200" y="10" width="3.800" height="3.500"/><rect x="3" y="14.600" width="3.800" height="3.500"/><rect x="8.100" y="14.600" width="3.800" height="3.500"/><rect x="3" y="19.200" width="3.800" height="3.500"/><rect x="8.100" y="19.200" width="3.800" height="3.500"/></g><rect x="13.200" y="14.600" width="3.800" height="8.100" fill="#1d4fa0"/></svg>
<svg class="a" style="left:641.0px;top:6.5px" width="26" height="26" viewBox="0 0 26 26"><ellipse cx="12" cy="11" rx="11" ry="7.500" fill="#f4f4f6" stroke="#d23a3a" stroke-width="1.400" transform="rotate(-12 12 11)"/><path d="M2 13 q8 8 20 1 l.5 3 q-11 7 -21 -1z" fill="#9aa0a8"/><path d="M9 5 L17.500 20 M16 4 L12.500 19" stroke="#c8ccd2" stroke-width="1.500"/><circle cx="13" cy="22" r="2.300" fill="none" stroke="#2c7be0" stroke-width="1.600"/><circle cx="19" cy="20.500" r="2.300" fill="none" stroke="#2c7be0" stroke-width="1.600"/></svg>
<svg class="a" style="left:689.5px;top:6.5px" width="26" height="26" viewBox="0 0 26 26"><path d="M1.500 15 C1.500 8 8 4.500 14 4.500 C20 4.500 23.500 8 23 12 C22.500 15 19 14.500 17.500 16 C16 17.500 18 20 15 22 C10 24.500 1.500 22 1.500 15Z" fill="#cfe0f0" stroke="#8fa6c0" stroke-width=".8"/><circle cx="6.500" cy="13" r="1.700" fill="#e03a3a"/><circle cx="10" cy="9.500" r="1.700" fill="#f2c230"/><circle cx="15" cy="8.500" r="1.700" fill="#46b04a"/><circle cx="6.800" cy="17.800" r="1.700" fill="#2c7be0"/><path d="M22.500 1 L24.500 2.500 L14.500 20.500 L12.500 19.500Z" fill="#c98a3e"/><path d="M12.500 19.500 L14.500 20.500 L12 25Z" fill="#5a3a1c"/><path d="M22.500 1 L24.500 2.500 L25.300 .3Z" fill="#e8c27a"/></svg>
<svg class="a" style="left:738.5px;top:6.5px" width="26" height="26" viewBox="0 0 26 26"><circle cx="13" cy="13" r="12" fill="#fff"/><path d="M13 1 A12 12 0 0 1 23.400 7 H13 A6 6 0 0 0 7.800 16 L2.600 7 A12 12 0 0 1 13 1Z" fill="#e33b2e"/><path d="M23.400 7 A12 12 0 0 1 13 25 L18.200 16 A6 6 0 0 0 13 7Z" fill="#fbc116"/><path d="M13 25 A12 12 0 0 1 2.600 7 L7.800 16 A6 6 0 0 0 18.200 16Z" fill="#2da94f"/><circle cx="13" cy="13" r="5.600" fill="#fff"/><circle cx="13" cy="13" r="4.500" fill="#3f7ee8"/></svg>
<svg class="a" style="left:786.5px;top:6.5px" width="26" height="26" viewBox="0 0 26 26"><circle cx="9" cy="9.500" r="7.500" fill="#d8d8d8" stroke="#666" stroke-width="1"/><circle cx="15.500" cy="13" r="8.500" fill="#e4e4e4" stroke="#555" stroke-width="1"/><g fill="#444"><circle cx="15.500" cy="8" r="1.900"/><circle cx="11" cy="11.500" r="1.900"/><circle cx="20" cy="11.500" r="1.900"/><circle cx="12.500" cy="16.800" r="1.900"/><circle cx="18.500" cy="16.800" r="1.900"/><circle cx="6" cy="7" r="1.500"/><circle cx="10" cy="4.500" r="1.500"/></g><path d="M17 14 L22 10 L21.500 16Z" fill="#2c7be0"/><path d="M17 15 L24.500 17 L19 19.500Z" fill="#46b04a"/><path d="M16 17 L22 25 L15.500 24Z" fill="#e8862a"/><path d="M15 17 L17 24 L12.500 22Z" fill="#e03a3a"/></svg>
<svg class="a" style="left:836.5px;top:6.5px" width="24" height="26" viewBox="0 0 24 26"><rect x="1" y="4" width="17.500" height="21" fill="#f2f2ec" stroke="#8a8a80" stroke-width="1"/><rect x="2" y="15" width="15.500" height="9" fill="#6fc83c"/><rect x="2" y="5" width="15.500" height="10" fill="#b7e36a"/><path d="M4.500 8v9M6 12.500h6" stroke="#222" stroke-width="1.300"/><circle cx="8" cy="12.500" r=".9" fill="#222"/><circle cx="11" cy="12.500" r=".9" fill="#222"/><path d="M21 .8 L23.300 2.500 L14 17 L11.500 18.500 L12 15.500Z" fill="#f2a13a" stroke="#b96a18" stroke-width=".6"/><path d="M21 .8 L23.300 2.500 L22.300 4 L20 2.300Z" fill="#e0506a"/></svg>
<svg class="a" style="left:885.5px;top:6.5px" width="24" height="26" viewBox="0 0 24 26"><path d="M8 2.500 L22 4 L20 22 L2 20.500Z" fill="#d9eef2" stroke="#8aa0a8" stroke-width=".8"/><path d="M8 2.500 L22 4 L21.600 7 L7.500 5.500Z" fill="#f4f8fa"/><path d="M7 7 L19 10 L8 19 L3.500 18Z" fill="#7fd0d8" opacity=".75"/><path d="M2 20.500 L20 22 L19.500 24.500 L2.500 23Z" fill="#b8a070"/><path d="M9 2.500v-1.500M12 2.800v-1.500M15 3.100v-1.500M18 3.400v-1.500" stroke="#666" stroke-width=".9"/></svg>
<svg class="a" style="left:934.0px;top:6.5px" width="24" height="26" viewBox="0 0 24 26"><path d="M12 1.500 L22 6 V17 L12 22 L2 17 V6Z" fill="#16305e" stroke="#d8e2f2" stroke-width="2.200" stroke-linejoin="round"/><path d="M12 1.500 L22 6 L12 10.500 L2 6Z" fill="#274a86" stroke="#d8e2f2" stroke-width="1.600" stroke-linejoin="round"/><path d="M12 10.500V22" stroke="#d8e2f2" stroke-width="1.600"/><ellipse cx="12" cy="24" rx="5.500" ry="1.500" fill="#7d8aa6"/></svg>
<svg class="a" style="left:985.8px;top:8.8px" width="22" height="22" viewBox="0 0 24 24"><circle cx="12" cy="12" r="11.500" fill="#0a5ac0"/><circle cx="12" cy="12" r="11.500" fill="none" stroke="#0a4fa6" stroke-width=".8"/><text x="12" y="17" text-anchor="middle" font-family="Liberation Sans, sans-serif" font-size="15" font-style="italic" font-weight="bold" fill="#fff" textLength="14" lengthAdjust="spacingAndGlyphs">hp</text></svg>
<svg class="a" style="left:1032.0px;top:6.5px" width="26" height="26" viewBox="0 0 26 26"><path d="M9 2 L24 1 L24.500 14 L10 15.500Z" fill="#c8ccd4" stroke="#80858f" stroke-width=".8"/><path d="M11 4 L22.500 3.200 L22.800 12.500 L11.600 13.500Z" fill="#1a2fc8"/><path d="M13 5 l5 3 l-4 4z" fill="#4a78f0"/><path d="M2 13 L14 12 L16.500 15 V24 L4 25 L2 22Z" fill="#a9aeb6" stroke="#6f747d" stroke-width=".8"/><path d="M2 16.500 L16.500 15.300" stroke="#6f747d" stroke-width=".9"/><rect x="8" y="15" width="3" height="2.500" fill="#e8e8e8"/><path d="M5 13 q3 -4 7 -1" fill="none" stroke="#777" stroke-width="1.200"/></svg>
<svg class="a" style="left:1082.5px;top:6.5px" width="24" height="26" viewBox="0 0 24 26"><path d="M10 1.500 h4 l6 18 h-16z" fill="#f58a0a"/><path d="M8.300 7 h7.400 l1.300 4 h-10z" fill="#f2f2f2"/><path d="M5.800 14.500 h12.400 l1.200 3.500 h-14.800z" fill="#f2f2f2"/><path d="M2 19.500 h20 l1.500 5 h-23z" fill="#e87600"/><path d="M10 1.500 h4 l.6 2 h-5.200z" fill="#ffa834"/></svg>
<div class="a" style="left:1120px;top:0;width:48px;height:40px;background:#44525f"></div>
<svg class="a" style="left:1131.0px;top:7.5px" width="26" height="24" viewBox="0 0 26 24"><rect x="8" y="1" width="17" height="22" rx="1.500" fill="#2a7fe0"/><rect x="8" y="1" width="17" height="5.500" fill="#41a5ee"/><rect x="8" y="6.500" width="17" height="5.500" fill="#2b7cd3"/><rect x="8" y="12" width="17" height="5.500" fill="#185abd"/><rect x="8" y="17.500" width="17" height="5.500" fill="#103f91"/><rect x="1" y="5.500" width="13" height="13" rx="1" fill="#185abd"/><text x="7.500" y="16" text-anchor="middle" font-family="Liberation Sans, sans-serif" font-size="10.500" font-weight="bold" fill="#fff" textLength="10" lengthAdjust="spacingAndGlyphs">W</text></svg>
<div class="a" style="left:487px;top:37.500px;width:40px;height:3px;background:#76b9ed"></div>
<div class="a" style="left:732px;top:37.500px;width:30px;height:3px;background:#76b9ed"></div>
<div class="a" style="left:830px;top:37.500px;width:40px;height:3px;background:#76b9ed"></div>
<div class="a" style="left:879px;top:37.500px;width:30px;height:3px;background:#76b9ed"></div>
<div class="a" style="left:928px;top:37.500px;width:40px;height:3px;background:#76b9ed"></div>
<div class="a" style="left:977px;top:37.500px;width:40px;height:3px;background:#76b9ed"></div>
<div class="a" style="left:1026px;top:37.500px;width:40px;height:3px;background:#76b9ed"></div>
<div class="a" style="left:1075px;top:37.500px;width:40px;height:3px;background:#76b9ed"></div>
<div class="a" style="left:1120px;top:37.500px;width:48px;height:3px;background:#76b9ed"></div>
<div class="a" style="left:764px;top:37.500px;width:8px;height:3px;background:#5b8fc0"></div>
<div class="a" style="left:911px;top:37.500px;width:8px;height:3px;background:#5b8fc0"></div>
<svg class="a" style="left:1264.0px;top:7.5px" width="24" height="24" viewBox="0 0 24 24"><g fill="#d83b01"><rect x="1" y="9.500" width="2.600" height="13.500"/><rect x="6.500" y="13.500" width="2.600" height="9.500"/><rect x="12" y="17.500" width="2.600" height="5.500"/><rect x="17" y="21" width="2" height="2"/><rect x="21" y="21" width="2" height="2"/></g><path d="M2 1.500 Q8 11 20 12 M15.500 7 L21 12 L15.500 17" fill="none" stroke="#d83b01" stroke-width="2.200" stroke-linecap="round" stroke-linejoin="round"/></svg>
<div class="t" style="left:1296.4px;top:12px;font-size:14.5px;line-height:16px;color:#fff;letter-spacing:-0.98px;">DOW</div>
<div class="t" style="left:1339.0px;top:12px;font-size:14.5px;line-height:16px;color:#f1595f;letter-spacing:-0.74px;">-0.13%</div>
<svg class="a" style="left:1404.0px;top:14.5px" width="14" height="10" viewBox="0 0 14 10"><path d="M1.500 8 L7 2.200 L12.500 8" fill="none" stroke="#fff" stroke-width="1.400"/></svg>
<svg class="a" style="left:1428.0px;top:9.5px" width="14" height="20" viewBox="0 0 14 20"><g fill="none" stroke="#fff" stroke-width="1.200"><rect x="1" y="6" width="8" height="8" rx="1.500"/><path d="M9 9 L13 6.500 V13.500 L9 11"/><path d="M2 3.500 Q5 1 9 3.500M2 16.500 Q5 19 9 16.500"/></g></svg>
<svg class="a" style="left:1450.0px;top:10.5px" width="18" height="18" viewBox="0 0 18 18"><path d="M3 11 a3.500 3.500 0 0 1 2 -6 a4.500 4.500 0 0 1 8.500 1 a3 3 0 0 1 0 6 h-9z" fill="#d8d8d8"/><path d="M2 12 a3 3 0 0 1 3 -4 a4 4 0 0 1 6 1 h3 v3z" fill="#9a9a9a"/><circle cx="12.500" cy="12.500" r="4.500" fill="#e81123"/><path d="M10.600 10.600 l3.800 3.800 M14.400 10.600 l-3.800 3.800" stroke="#fff" stroke-width="1.300"/></svg>
<svg class="a" style="left:1474.0px;top:11.5px" width="18" height="16" viewBox="0 0 18 16"><g fill="none" stroke="#fff" stroke-width="1.200"><path d="M4 1H17V10H4Z"/><path d="M10.500 10V13.500M6.500 14H14.500"/><path d="M1 2.500H6.500V6.500H1Z" fill="#1c2b3e"/><path d="M3.700 6.500V8"/></g></svg>
<svg class="a" style="left:1498.0px;top:11.5px" width="18" height="16" viewBox="0 0 18 16"><g fill="none" stroke="#fff" stroke-width="1.200"><path d="M1 5.500H4L8 2V14L4 10.500H1Z"/><path d="M10.500 5.500 Q12 8 10.500 10.500M12.800 3.500 Q15.500 8 12.800 12.500M15 1.500 Q19 8 15 14.500"/></g></svg>
<div class="t" style="left:1525.0px;top:13px;font-size:12.5px;line-height:14px;color:#fff;letter-spacing:-1.20px;">ENG</div>
<div class="t" style="left:1569.2px;top:4px;font-size:12.5px;line-height:14px;color:#fff;letter-spacing:-0.65px;">1:46 PM</div>
<div class="t" style="left:1561.0px;top:22px;font-size:12.5px;line-height:14px;color:#fff;letter-spacing:-0.54px;">2024-04-24</div>
<svg class="a" style="left:1635.5px;top:7.5px" width="22" height="24" viewBox="0 0 22 24"><path d="M3 3H19V15.500H8.500L5 19V15.500H3Z" fill="#fff"/><path d="M6 7h10M6 9.700h10M6 12.400h10" stroke="#1c2a40" stroke-width="1"/><circle cx="16" cy="18" r="5.500" fill="#1c2a40" stroke="#777" stroke-width="1"/><text x="16" y="22" text-anchor="middle" font-family="Liberation Sans, sans-serif" font-size="10.500" fill="#fff">1</text></svg>
</div>
</body>
</html>
